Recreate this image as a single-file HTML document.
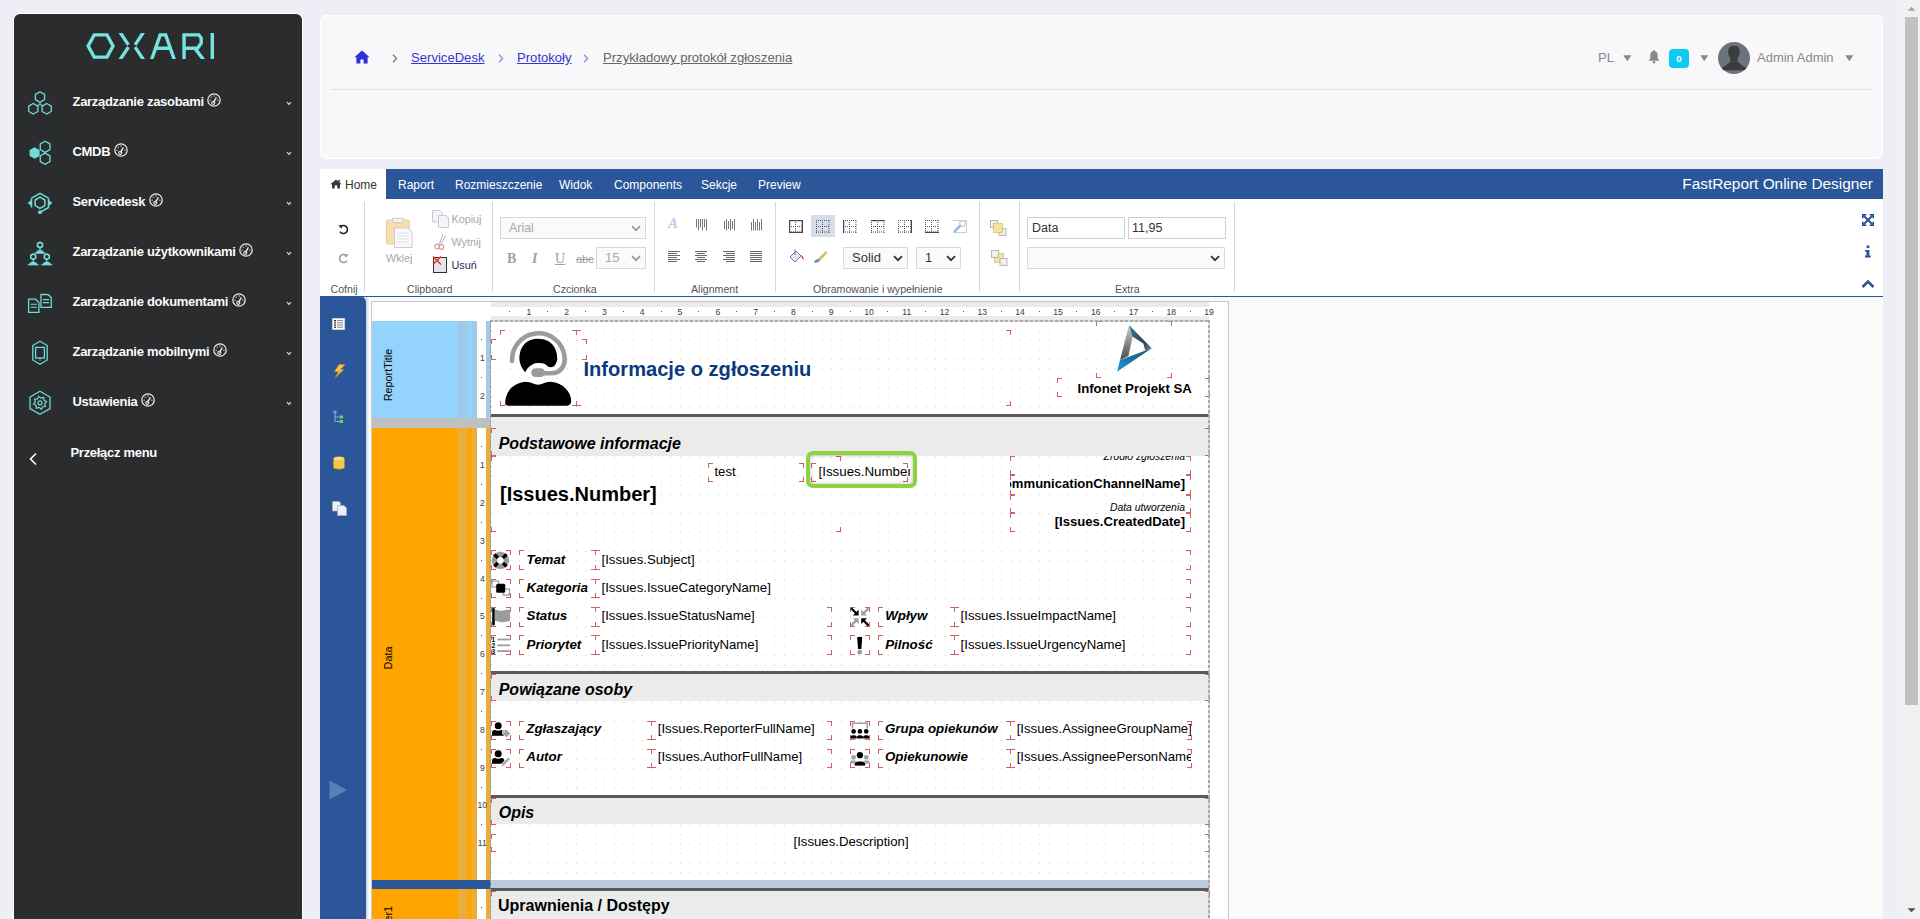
<!DOCTYPE html><html><head><meta charset="utf-8"><style>
html,body{margin:0;padding:0}
body{width:1920px;height:919px;overflow:hidden;position:relative;background:#eeeef6;font-family:"Liberation Sans",sans-serif}
.mi{position:absolute;left:72.5px;height:20px;line-height:20px;color:#fbfbfb;font-weight:bold;font-size:13px;white-space:nowrap;letter-spacing:-0.3px;margin-top:1px}
.gauge{display:inline-block;vertical-align:top;margin-left:3.6px;margin-top:0.6px;height:14px}
.gauge svg{display:block}
.bc{position:absolute;top:50px;line-height:16px;font-size:13.1px;text-decoration:underline;text-underline-offset:1px;white-space:nowrap}
.hr{position:absolute;top:49px;line-height:17px;font-size:13px;color:#888;white-space:nowrap}
.tb{position:absolute;top:176px;line-height:18px;font-size:12px;white-space:nowrap}
.gl{position:absolute;top:282px;line-height:14px;font-size:10.6px;color:#555;white-space:nowrap}
.tl{position:absolute;line-height:14px;font-size:10.8px;white-space:nowrap}
.rn{position:absolute;width:20px;text-align:center;font-size:8.6px;line-height:9px;color:#3a3a3a;font-family:"Liberation Sans",sans-serif}
.bl{position:absolute;width:200px;height:14px;line-height:14px;text-align:center;white-space:nowrap;font-size:10.8px;color:#000;transform:rotate(-90deg);transform-origin:50% 50%}
.mk{position:absolute;background:#c86464}
.rt{position:absolute;white-space:nowrap;line-height:1}
</style></head><body>
<div id="sb" style="position:absolute;left:14px;top:14px;width:288px;height:920px;background:#2b2c2e;border-radius:6px 6px 0 0;box-shadow:0 0 0 1px #fff"></div>
<svg style="position:absolute;left:80px;top:25px" width="140" height="45" viewBox="0 0 1920 617">
<g fill="none" stroke="#76e4de" stroke-width="47" stroke-linejoin="miter">
<polygon points="112,288 195,135 370,135 453,288 370,440 195,440"/>
<clipPath id="lgc"><rect x="0" y="110" width="1920" height="355"/></clipPath><path clip-path="url(#lgc)" d="M530,70 L664,272 M664,303 L530,505 M890,70 L756,272 M756,303 L890,505" stroke-width="46" stroke-linecap="butt"/>
<path clip-path="url(#lgc)" d="M978,485 L1100,135 L1175,135 L1297,485 M1045,318 L1230,318"/>
<path clip-path="url(#lgc)" d="M1427,485 L1427,135 L1630,135 L1662,178 L1662,250 L1612,318 L1427,318 M1570,310 L1700,485"/>
<path d="M1814,110 L1814,465"/>
</g></svg>
<div class="mi" style="top:91px">Zarządzanie zasobami<span class="gauge"><svg width="14" height="14" viewBox="0 0 14 14"><circle cx="7" cy="7" r="6.2" fill="none" stroke="#e8e8e8" stroke-width="1.25"/><path d="M6.4,9.7 L9.4,4.3" stroke="#e8e8e8" stroke-width="1.4"/><circle cx="6.3" cy="9.8" r="1.6" fill="none" stroke="#e8e8e8" stroke-width="1.1"/><circle cx="7" cy="3" r=".65" fill="#e8e8e8"/><circle cx="4.2" cy="4.2" r=".65" fill="#e8e8e8"/><circle cx="3.1" cy="7.2" r=".65" fill="#e8e8e8"/><circle cx="10.9" cy="7.2" r=".65" fill="#e8e8e8"/></svg></span></div>
<svg style="position:absolute;left:286px;top:101px" width="6" height="5" viewBox="0 0 6 5"><path d="M1,1.2 L3,3.4 L5,1.2" fill="none" stroke="#ddd" stroke-width="1.1"/></svg>
<div class="mi" style="top:141px">CMDB<span class="gauge"><svg width="14" height="14" viewBox="0 0 14 14"><circle cx="7" cy="7" r="6.2" fill="none" stroke="#e8e8e8" stroke-width="1.25"/><path d="M6.4,9.7 L9.4,4.3" stroke="#e8e8e8" stroke-width="1.4"/><circle cx="6.3" cy="9.8" r="1.6" fill="none" stroke="#e8e8e8" stroke-width="1.1"/><circle cx="7" cy="3" r=".65" fill="#e8e8e8"/><circle cx="4.2" cy="4.2" r=".65" fill="#e8e8e8"/><circle cx="3.1" cy="7.2" r=".65" fill="#e8e8e8"/><circle cx="10.9" cy="7.2" r=".65" fill="#e8e8e8"/></svg></span></div>
<svg style="position:absolute;left:286px;top:151px" width="6" height="5" viewBox="0 0 6 5"><path d="M1,1.2 L3,3.4 L5,1.2" fill="none" stroke="#ddd" stroke-width="1.1"/></svg>
<div class="mi" style="top:191px">Servicedesk<span class="gauge"><svg width="14" height="14" viewBox="0 0 14 14"><circle cx="7" cy="7" r="6.2" fill="none" stroke="#e8e8e8" stroke-width="1.25"/><path d="M6.4,9.7 L9.4,4.3" stroke="#e8e8e8" stroke-width="1.4"/><circle cx="6.3" cy="9.8" r="1.6" fill="none" stroke="#e8e8e8" stroke-width="1.1"/><circle cx="7" cy="3" r=".65" fill="#e8e8e8"/><circle cx="4.2" cy="4.2" r=".65" fill="#e8e8e8"/><circle cx="3.1" cy="7.2" r=".65" fill="#e8e8e8"/><circle cx="10.9" cy="7.2" r=".65" fill="#e8e8e8"/></svg></span></div>
<svg style="position:absolute;left:286px;top:201px" width="6" height="5" viewBox="0 0 6 5"><path d="M1,1.2 L3,3.4 L5,1.2" fill="none" stroke="#ddd" stroke-width="1.1"/></svg>
<div class="mi" style="top:241px">Zarządzanie użytkownikami<span class="gauge"><svg width="14" height="14" viewBox="0 0 14 14"><circle cx="7" cy="7" r="6.2" fill="none" stroke="#e8e8e8" stroke-width="1.25"/><path d="M6.4,9.7 L9.4,4.3" stroke="#e8e8e8" stroke-width="1.4"/><circle cx="6.3" cy="9.8" r="1.6" fill="none" stroke="#e8e8e8" stroke-width="1.1"/><circle cx="7" cy="3" r=".65" fill="#e8e8e8"/><circle cx="4.2" cy="4.2" r=".65" fill="#e8e8e8"/><circle cx="3.1" cy="7.2" r=".65" fill="#e8e8e8"/><circle cx="10.9" cy="7.2" r=".65" fill="#e8e8e8"/></svg></span></div>
<svg style="position:absolute;left:286px;top:251px" width="6" height="5" viewBox="0 0 6 5"><path d="M1,1.2 L3,3.4 L5,1.2" fill="none" stroke="#ddd" stroke-width="1.1"/></svg>
<div class="mi" style="top:291px">Zarządzanie dokumentami<span class="gauge"><svg width="14" height="14" viewBox="0 0 14 14"><circle cx="7" cy="7" r="6.2" fill="none" stroke="#e8e8e8" stroke-width="1.25"/><path d="M6.4,9.7 L9.4,4.3" stroke="#e8e8e8" stroke-width="1.4"/><circle cx="6.3" cy="9.8" r="1.6" fill="none" stroke="#e8e8e8" stroke-width="1.1"/><circle cx="7" cy="3" r=".65" fill="#e8e8e8"/><circle cx="4.2" cy="4.2" r=".65" fill="#e8e8e8"/><circle cx="3.1" cy="7.2" r=".65" fill="#e8e8e8"/><circle cx="10.9" cy="7.2" r=".65" fill="#e8e8e8"/></svg></span></div>
<svg style="position:absolute;left:286px;top:301px" width="6" height="5" viewBox="0 0 6 5"><path d="M1,1.2 L3,3.4 L5,1.2" fill="none" stroke="#ddd" stroke-width="1.1"/></svg>
<div class="mi" style="top:341px">Zarządzanie mobilnymi<span class="gauge"><svg width="14" height="14" viewBox="0 0 14 14"><circle cx="7" cy="7" r="6.2" fill="none" stroke="#e8e8e8" stroke-width="1.25"/><path d="M6.4,9.7 L9.4,4.3" stroke="#e8e8e8" stroke-width="1.4"/><circle cx="6.3" cy="9.8" r="1.6" fill="none" stroke="#e8e8e8" stroke-width="1.1"/><circle cx="7" cy="3" r=".65" fill="#e8e8e8"/><circle cx="4.2" cy="4.2" r=".65" fill="#e8e8e8"/><circle cx="3.1" cy="7.2" r=".65" fill="#e8e8e8"/><circle cx="10.9" cy="7.2" r=".65" fill="#e8e8e8"/></svg></span></div>
<svg style="position:absolute;left:286px;top:351px" width="6" height="5" viewBox="0 0 6 5"><path d="M1,1.2 L3,3.4 L5,1.2" fill="none" stroke="#ddd" stroke-width="1.1"/></svg>
<div class="mi" style="top:391px">Ustawienia<span class="gauge"><svg width="14" height="14" viewBox="0 0 14 14"><circle cx="7" cy="7" r="6.2" fill="none" stroke="#e8e8e8" stroke-width="1.25"/><path d="M6.4,9.7 L9.4,4.3" stroke="#e8e8e8" stroke-width="1.4"/><circle cx="6.3" cy="9.8" r="1.6" fill="none" stroke="#e8e8e8" stroke-width="1.1"/><circle cx="7" cy="3" r=".65" fill="#e8e8e8"/><circle cx="4.2" cy="4.2" r=".65" fill="#e8e8e8"/><circle cx="3.1" cy="7.2" r=".65" fill="#e8e8e8"/><circle cx="10.9" cy="7.2" r=".65" fill="#e8e8e8"/></svg></span></div>
<svg style="position:absolute;left:286px;top:401px" width="6" height="5" viewBox="0 0 6 5"><path d="M1,1.2 L3,3.4 L5,1.2" fill="none" stroke="#ddd" stroke-width="1.1"/></svg>
<svg style="position:absolute;left:20px;top:80px" width="40" height="350" viewBox="20 80 40 350"><g fill="none" stroke="#6fdcd6" stroke-width="1.3"><polygon points="40.00,91.70 44.59,94.35 44.59,99.65 40.00,102.30 35.41,99.65 35.41,94.35"/><polygon points="33.30,103.50 37.89,106.15 37.89,111.45 33.30,114.10 28.71,111.45 28.71,106.15"/><polygon points="46.70,103.50 51.29,106.15 51.29,111.45 46.70,114.10 42.11,111.45 42.11,106.15"/><path d="M40,102.5 L40,105 M36.5,106 L40,104.5 L43.5,106"/><polygon points="34.60,147.20 39.62,150.10 39.62,155.90 34.60,158.80 29.58,155.90 29.58,150.10" fill="#6fdcd6" stroke="none"/><polygon points="45.10,141.20 49.95,144.00 49.95,149.60 45.10,152.40 40.25,149.60 40.25,144.00"/><polygon points="45.10,153.10 49.95,155.90 49.95,161.50 45.10,164.30 40.25,161.50 40.25,155.90"/><polygon points="40.00,197.20 44.85,200.00 44.85,205.60 40.00,208.40 35.15,205.60 35.15,200.00" stroke-width="1.5"/><path d="M31.5,198.2 L40,193.4 L48.5,198.2 M31.5,207.5 L31.5,198.2 M48.5,198.2 L48.5,207.5 L40,212.3" stroke-width="1.5"/><path d="M27.6,203 L32,199.6 L32,206.4 Z M52.4,203 L48,199.6 L48,206.4 Z" fill="#6fdcd6" stroke="none"/><circle cx="40" cy="212.2" r="1.9" fill="#6fdcd6" stroke="none"/><polygon points="40.00,242.20 42.42,243.60 42.42,246.40 40.00,247.80 37.58,246.40 37.58,243.60" stroke-width="1.7"/><path d="M34.6,253.4 L38.4,250.2 L41.6,250.2 L45.4,253.4 Z" fill="#6fdcd6" stroke="#6fdcd6" stroke-width="0.6"/><path d="M40,247.8 L40,250.2" stroke-width="1"/><polygon points="33.20,253.90 35.62,255.30 35.62,258.10 33.20,259.50 30.78,258.10 30.78,255.30" stroke-width="1.7"/><path d="M27.800000000000004,265.09999999999997 L31.6,261.9 L34.800000000000004,261.9 L38.6,265.09999999999997 Z" fill="#6fdcd6" stroke="#6fdcd6" stroke-width="0.6"/><path d="M33.2,259.5 L33.2,261.9" stroke-width="1"/><polygon points="46.80,253.90 49.22,255.30 49.22,258.10 46.80,259.50 44.38,258.10 44.38,255.30" stroke-width="1.7"/><path d="M41.4,265.09999999999997 L45.199999999999996,261.9 L48.4,261.9 L52.199999999999996,265.09999999999997 Z" fill="#6fdcd6" stroke="#6fdcd6" stroke-width="0.6"/><path d="M46.8,259.5 L46.8,261.9" stroke-width="1"/><path d="M41,294.5 L48,294.5 L51.2,297.5 L51.2,307.3 L41,307.3 Z" stroke-width="1.3"/><path d="M43,299.6 L49,299.6 M43,302.6 L49,302.6" stroke-width="1.1"/><path d="M28.6,299.2 L35.5,299.2 L38.9,302.3 L38.9,312.3 L28.6,312.3 Z" stroke-width="1.3"/><path d="M30.6,304.3 L36.8,304.3 M30.6,307.2 L36.8,307.2" stroke-width="1.1"/><polygon points="40,341.2 47.2,345.5 47.2,360 40,364.3 32.8,360 32.8,345.5"/><rect x="35.6" y="347.4" width="8.8" height="10.6"/><rect x="39" y="359.6" width="2" height="0.8" fill="#6fdcd6" stroke="none"/><polygon points="40.00,391.30 49.96,397.05 49.96,408.55 40.00,414.30 30.04,408.55 30.04,397.05"/><polygon points="46.47,401.51 44.61,403.72 45.49,406.47 42.61,406.71 41.29,409.27 39.08,407.41 36.33,408.29 36.09,405.41 33.53,404.09 35.39,401.88 34.51,399.13 37.39,398.89 38.71,396.33 40.92,398.19 43.67,397.31 43.91,400.19" stroke-width="1.2"/><circle cx="40" cy="402.8" r="2" stroke-width="1.2"/></g></svg>
<div class="mi" style="top:442px;left:70.5px">Przełącz menu</div>
<svg style="position:absolute;left:28px;top:452px" width="10" height="14" viewBox="0 0 10 14"><path d="M8,1.5 L2.5,7 L8,12.5" fill="none" stroke="#fff" stroke-width="1.6"/></svg>
<div style="position:absolute;left:320px;top:15px;width:1563px;height:144px;background:#f8f8fb;border-radius:6px;box-sizing:border-box;border:1px solid #fff"></div>
<div style="position:absolute;left:330px;top:89px;width:1543px;height:1px;background:#dfe1ea"></div>
<svg style="position:absolute;left:354px;top:50px" width="16" height="14" viewBox="0 0 16 14"><path d="M8,0.6 L15.6,7.2 L13.6,7.2 L13.6,13.6 L9.6,13.6 L9.6,9.4 L6.4,9.4 L6.4,13.6 L2.4,13.6 L2.4,7.2 L0.4,7.2 Z" fill="#2f30d6"/></svg>
<svg style="position:absolute;left:392px;top:54px" width="6" height="9" viewBox="0 0 6 9"><path d="M1,0.8 L4.6,4.5 L1,8.2" fill="none" stroke="#777" stroke-width="1.3"/></svg>
<a class="bc" style="left:411px;color:#3434d0">ServiceDesk</a>
<svg style="position:absolute;left:498px;top:54px" width="6" height="9" viewBox="0 0 6 9"><path d="M1,0.8 L4.6,4.5 L1,8.2" fill="none" stroke="#8a8ae8" stroke-width="1.3"/></svg>
<a class="bc" style="left:517px;color:#3434d0">Protokoły</a>
<svg style="position:absolute;left:583px;top:54px" width="6" height="9" viewBox="0 0 6 9"><path d="M1,0.8 L4.6,4.5 L1,8.2" fill="none" stroke="#8a8ae8" stroke-width="1.3"/></svg>
<a class="bc" style="left:603px;color:#666">Przykładowy protokół zgłoszenia</a>
<div class="hr" style="left:1598px">PL</div>
<svg style="position:absolute;left:1622.5px;top:55px" width="9" height="7" viewBox="0 0 9 7"><path d="M0.3,0.3 L8.3,0.3 L4.3,6.3 Z" fill="#888"/></svg>
<svg style="position:absolute;left:1647px;top:50px" width="14" height="14" viewBox="0 0 14 14"><path d="M7,1 C4.2,1 3.3,3.2 3.3,5.5 L3.3,8.6 L1.6,10.8 L12.4,10.8 L10.7,8.6 L10.7,5.5 C10.7,3.2 9.8,1 7,1 Z" fill="#8a8a8a"/><circle cx="7" cy="12.2" r="1.3" fill="#8a8a8a"/><rect x="6.3" y="0" width="1.4" height="1.6" fill="#8a8a8a"/></svg>
<div style="position:absolute;left:1669px;top:49px;width:20px;height:19px;background:#0dcaf0;border-radius:4px;color:#fff;font-weight:bold;font-size:9.5px;line-height:20px;text-align:center">0</div>
<svg style="position:absolute;left:1699.5px;top:55px" width="9" height="7" viewBox="0 0 9 7"><path d="M0.3,0.3 L8.3,0.3 L4.3,6.3 Z" fill="#888"/></svg>
<svg style="position:absolute;left:1718px;top:42px" width="32" height="32" viewBox="0 0 32 32"><defs><clipPath id="avc"><circle cx="16" cy="16" r="16"/></clipPath></defs><circle cx="16" cy="16" r="16" fill="#6b737b"/><g clip-path="url(#avc)" fill="#3c3c3c"><path d="M10.2,9.5 C10.2,5.5 12.5,3.8 15.9,3.8 C19.3,3.8 21.7,5.5 21.7,9.5 C21.7,12.5 20.8,14.5 19.6,15.8 L19.6,19.2 L12.3,19.2 L12.3,15.8 C11.1,14.5 10.2,12.5 10.2,9.5 Z"/><path d="M1,28.2 L7.5,23.6 C9.5,22.2 11.5,20.4 12.8,19.2 L19.1,19.2 C20.4,20.4 22.4,22.2 24.4,23.6 L31,28.2 Z"/></g></svg>
<div class="hr" style="left:1757px">Admin Admin</div>
<svg style="position:absolute;left:1844.5px;top:55px" width="9" height="7" viewBox="0 0 9 7"><path d="M0.3,0.3 L8.3,0.3 L4.3,6.3 Z" fill="#888"/></svg>
<div style="position:absolute;left:1903px;top:0;width:17px;height:919px;background:#f1f1f1"></div>
<div style="position:absolute;left:1905px;top:17px;width:13px;height:688px;background:#c1c1c1"></div>
<svg style="position:absolute;left:1903px;top:0" width="17" height="17" viewBox="0 0 17 17"><path d="M4.5,10.8 L8.5,6.8 L12.5,10.8 Z" fill="#a3a3a3"/></svg>
<svg style="position:absolute;left:1903px;top:902px" width="17" height="17" viewBox="0 0 17 17"><path d="M4.5,6.2 L8.5,10.2 L12.5,6.2 Z" fill="#505050"/></svg>
<div style="position:absolute;left:320px;top:169px;width:1563px;height:750px;background:#fafafa"></div>
<div style="position:absolute;left:320px;top:169px;width:1563px;height:127px;background:#fff"></div>
<div style="position:absolute;left:386px;top:169px;width:1497px;height:30px;background:#2b579a"></div>
<svg style="position:absolute;left:330px;top:179px" width="12" height="10" viewBox="0 0 12 10"><path d="M6,0.5 L11.6,5.2 L10,5.2 L10,9.6 L7.3,9.6 L7.3,6.6 L4.7,6.6 L4.7,9.6 L2,9.6 L2,5.2 L0.4,5.2 Z" fill="#3a3a3a"/><rect x="8.3" y="0.8" width="1.5" height="2.6" fill="#3a3a3a"/></svg>
<div class="tb" style="left:345px;color:#333">Home</div>
<div class="tb" style="left:398px;color:#fff">Raport</div>
<div class="tb" style="left:455px;color:#fff">Rozmieszczenie</div>
<div class="tb" style="left:559px;color:#fff">Widok</div>
<div class="tb" style="left:614px;color:#fff">Components</div>
<div class="tb" style="left:701px;color:#fff">Sekcje</div>
<div class="tb" style="left:758px;color:#fff">Preview</div>
<div style="position:absolute;left:1573px;top:172px;width:300px;height:24px;line-height:24px;text-align:right;color:#fff;font-size:15.4px;white-space:nowrap">FastReport Online Designer</div>
<div style="position:absolute;left:364px;top:202px;width:1px;height:90px;background:#d8d8d8"></div>
<div style="position:absolute;left:492px;top:202px;width:1px;height:90px;background:#d8d8d8"></div>
<div style="position:absolute;left:654px;top:202px;width:1px;height:90px;background:#d8d8d8"></div>
<div style="position:absolute;left:775px;top:202px;width:1px;height:90px;background:#d8d8d8"></div>
<div style="position:absolute;left:979px;top:202px;width:1px;height:90px;background:#d8d8d8"></div>
<div style="position:absolute;left:1019px;top:202px;width:1px;height:90px;background:#d8d8d8"></div>
<div style="position:absolute;left:1234px;top:202px;width:1px;height:90px;background:#d8d8d8"></div>
<div style="position:absolute;left:320px;top:296px;width:1563px;height:1px;background:#2b579a"></div>
<div class="gl" style="left:330.5px">Cofnij</div>
<div class="gl" style="left:407px">Clipboard</div>
<div class="gl" style="left:553px">Czcionka</div>
<div class="gl" style="left:691px">Alignment</div>
<div class="gl" style="left:813px">Obramowanie i wypełnienie</div>
<div class="gl" style="left:1115px">Extra</div>
<svg style="position:absolute;left:337px;top:223px" width="13" height="13" viewBox="0 0 13 13"><path d="M3.2,4.2 A4,4 0 1 1 3,8.6" fill="none" stroke="#222" stroke-width="1.6"/><path d="M1.2,2.2 L4.8,2.2 L4.8,5.8 Z" fill="#222"/></svg>
<svg style="position:absolute;left:337px;top:252px" width="13" height="13" viewBox="0 0 13 13"><path d="M9.8,4.2 A4,4 0 1 0 10,8.6" fill="none" stroke="#9a9a9a" stroke-width="1.5"/><path d="M11.8,2.2 L8.2,2.2 L8.2,5.8 Z" fill="#9a9a9a"/></svg>
<svg style="position:absolute;left:385px;top:217px" width="28" height="32" viewBox="0 0 28 32">
<rect x="1.5" y="3" width="23" height="24" rx="2" fill="#f7e0ad" stroke="#e8cf9a" stroke-width="1"/>
<rect x="7.5" y="1.2" width="11" height="4.5" rx="1" fill="#f3f3f3" stroke="#bbb" stroke-width="0.8"/>
<path d="M9.5,11 L23,11 L27,15 L27,30.5 L9.5,30.5 Z" fill="#fafafa" stroke="#c9ccd6" stroke-width="1"/>
<path d="M12,16 L24,16 M12,19 L24,19 M12,22 L24,22 M12,25 L24,25" stroke="#d8dbe3" stroke-width="0.8"/></svg>
<div class="tl" style="left:386px;top:251px;color:#a8a8a8">Wklej</div>
<svg style="position:absolute;left:432px;top:210px" width="17" height="18" viewBox="0 0 17 18"><path d="M0.5,0.5 L8,0.5 L10,2.5 L10,12 L0.5,12 Z" fill="#f4f5f8" stroke="#c7cad3" stroke-width="1"/><path d="M6.5,5.5 L14,5.5 L16.5,8 L16.5,17.5 L6.5,17.5 Z" fill="#f4f5f8" stroke="#c7cad3" stroke-width="1"/></svg>
<div class="tl" style="left:451.5px;top:212px;color:#a8a8a8">Kopiuj</div>
<svg style="position:absolute;left:433px;top:233px" width="14" height="17" viewBox="0 0 14 17"><path d="M6,12 L10,1 M7.5,12 L12.5,2.5" stroke="#a9b6cc" stroke-width="1"/><circle cx="4" cy="13.5" r="2.3" fill="none" stroke="#e49a9a" stroke-width="1.2"/><circle cx="8.5" cy="14" r="2.3" fill="none" stroke="#e49a9a" stroke-width="1.2"/></svg>
<div class="tl" style="left:451.5px;top:235px;color:#a8a8a8">Wytnij</div>
<svg style="position:absolute;left:432px;top:256px" width="16" height="17" viewBox="0 0 16 17"><rect x="1.5" y="1.5" width="13" height="15" fill="#e2e6ee" stroke="#333" stroke-width="1"/><path d="M1,0.5 L9,8.5 M9,0.5 L1,8.5" stroke="#e32" stroke-width="1.5"/></svg>
<div class="tl" style="left:451.5px;top:257.5px;color:#1a2a55">Usuń</div>
<div style="position:absolute;left:500px;top:217px;width:144px;height:20px;border:1px solid #d9d9d9;background:#fafafa"></div><div style="position:absolute;left:509px;top:217px;height:22px;line-height:22px;font-size:12.4px;color:#a8a8a8">Arial</div><svg style="position:absolute;left:631px;top:225.0px" width="10" height="7" viewBox="0 0 10 7"><path d="M1,1.2 L5,5.2 L9,1.2" fill="none" stroke="#9a9a9a" stroke-width="1.8"/></svg>
<div style="position:absolute;left:596px;top:247px;width:48px;height:20px;border:1px solid #d9d9d9;background:#fafafa"></div><div style="position:absolute;left:605px;top:247px;height:22px;line-height:22px;font-size:13px;color:#a8a8a8">15</div><svg style="position:absolute;left:631px;top:255.0px" width="10" height="7" viewBox="0 0 10 7"><path d="M1,1.2 L5,5.2 L9,1.2" fill="none" stroke="#9a9a9a" stroke-width="1.8"/></svg>
<div style="position:absolute;left:507px;top:251px;font:bold 14px 'Liberation Serif',serif;color:#a0a0a0">B</div>
<div style="position:absolute;left:532px;top:251px;font:italic bold 14px 'Liberation Serif',serif;color:#a0a0a0">I</div>
<div style="position:absolute;left:555px;top:251px;font:14px 'Liberation Serif',serif;color:#a0a0a0;text-decoration:underline">U</div>
<div style="position:absolute;left:576px;top:252.5px;font:11px 'Liberation Sans',sans-serif;color:#a0a0a0;text-decoration:line-through">abc</div>
<div style="position:absolute;left:668px;top:215px;font:italic bold 15px 'Liberation Serif',serif;color:#b7cdee">A</div>
<svg style="position:absolute;left:696px;top:219px" width="12" height="12" viewBox="0 0 12 12"><rect x="0" y="0" width="1" height="8.5" fill="#777"/><rect x="2" y="0" width="1" height="11.5" fill="#777"/><rect x="4" y="0" width="1" height="8.5" fill="#777"/><rect x="6" y="0" width="1" height="11.5" fill="#777"/><rect x="8" y="0" width="1" height="8.5" fill="#777"/><rect x="10" y="0" width="1" height="11.5" fill="#777"/></svg>
<svg style="position:absolute;left:724px;top:219px" width="12" height="12" viewBox="0 0 12 12"><rect x="0" y="2" width="1" height="8" fill="#777"/><rect x="2" y="0" width="1" height="11.5" fill="#777"/><rect x="4" y="2" width="1" height="8" fill="#777"/><rect x="6" y="0" width="1" height="11.5" fill="#777"/><rect x="8" y="2" width="1" height="8" fill="#777"/><rect x="10" y="0" width="1" height="11.5" fill="#777"/></svg>
<svg style="position:absolute;left:751px;top:219px" width="12" height="12" viewBox="0 0 12 12"><rect x="0" y="3" width="1" height="8.5" fill="#777"/><rect x="2" y="0" width="1" height="11.5" fill="#777"/><rect x="4" y="3" width="1" height="8.5" fill="#777"/><rect x="6" y="0" width="1" height="11.5" fill="#777"/><rect x="8" y="3" width="1" height="8.5" fill="#777"/><rect x="10" y="0" width="1" height="11.5" fill="#777"/></svg>
<svg style="position:absolute;left:668px;top:251px" width="13" height="12" viewBox="0 0 13 12"><rect x="0" y="0" width="12" height="1" fill="#666"/><rect x="0" y="2" width="9" height="1" fill="#666"/><rect x="0" y="4" width="12" height="1" fill="#666"/><rect x="0" y="6" width="9" height="1" fill="#666"/><rect x="0" y="8" width="12" height="1" fill="#666"/><rect x="0" y="10" width="9" height="1" fill="#666"/></svg>
<svg style="position:absolute;left:695px;top:251px" width="13" height="12" viewBox="0 0 13 12"><rect x="0" y="0" width="12" height="1" fill="#666"/><rect x="2" y="2" width="8" height="1" fill="#666"/><rect x="0" y="4" width="12" height="1" fill="#666"/><rect x="2" y="6" width="8" height="1" fill="#666"/><rect x="0" y="8" width="12" height="1" fill="#666"/><rect x="2" y="10" width="8" height="1" fill="#666"/></svg>
<svg style="position:absolute;left:723px;top:251px" width="13" height="12" viewBox="0 0 13 12"><rect x="0" y="0" width="12" height="1" fill="#666"/><rect x="3" y="2" width="9" height="1" fill="#666"/><rect x="0" y="4" width="12" height="1" fill="#666"/><rect x="3" y="6" width="9" height="1" fill="#666"/><rect x="0" y="8" width="12" height="1" fill="#666"/><rect x="3" y="10" width="9" height="1" fill="#666"/></svg>
<svg style="position:absolute;left:750px;top:251px" width="13" height="12" viewBox="0 0 13 12"><rect x="0" y="0" width="12" height="1" fill="#666"/><rect x="0" y="2" width="12" height="1" fill="#666"/><rect x="0" y="4" width="12" height="1" fill="#666"/><rect x="0" y="6" width="12" height="1" fill="#666"/><rect x="0" y="8" width="12" height="1" fill="#666"/><rect x="0" y="10" width="12" height="1" fill="#666"/></svg>
<div style="position:absolute;left:811px;top:215px;width:24px;height:22px;background:#d5dcea"></div>
<svg style="position:absolute;left:789px;top:220px" width="14" height="13" viewBox="0 0 14 13"><g fill="#555"><rect x="0" y="0.0" width="1" height="1"/><rect x="2" y="0.0" width="1" height="1"/><rect x="4" y="0.0" width="1" height="1"/><rect x="6" y="0.0" width="1" height="1"/><rect x="8" y="0.0" width="1" height="1"/><rect x="10" y="0.0" width="1" height="1"/><rect x="12" y="0.0" width="1" height="1"/><rect x="0" y="6.0" width="1" height="1"/><rect x="2" y="6.0" width="1" height="1"/><rect x="4" y="6.0" width="1" height="1"/><rect x="6" y="6.0" width="1" height="1"/><rect x="8" y="6.0" width="1" height="1"/><rect x="10" y="6.0" width="1" height="1"/><rect x="12" y="6.0" width="1" height="1"/><rect x="0" y="11.5" width="1" height="1"/><rect x="2" y="11.5" width="1" height="1"/><rect x="4" y="11.5" width="1" height="1"/><rect x="6" y="11.5" width="1" height="1"/><rect x="8" y="11.5" width="1" height="1"/><rect x="10" y="11.5" width="1" height="1"/><rect x="12" y="11.5" width="1" height="1"/><rect x="0.0" y="0" width="1" height="1"/><rect x="0.0" y="2" width="1" height="1"/><rect x="0.0" y="4" width="1" height="1"/><rect x="0.0" y="6" width="1" height="1"/><rect x="0.0" y="8" width="1" height="1"/><rect x="0.0" y="10" width="1" height="1"/><rect x="0.0" y="12" width="1" height="1"/><rect x="6.0" y="0" width="1" height="1"/><rect x="6.0" y="2" width="1" height="1"/><rect x="6.0" y="4" width="1" height="1"/><rect x="6.0" y="6" width="1" height="1"/><rect x="6.0" y="8" width="1" height="1"/><rect x="6.0" y="10" width="1" height="1"/><rect x="6.0" y="12" width="1" height="1"/><rect x="12.5" y="0" width="1" height="1"/><rect x="12.5" y="2" width="1" height="1"/><rect x="12.5" y="4" width="1" height="1"/><rect x="12.5" y="6" width="1" height="1"/><rect x="12.5" y="8" width="1" height="1"/><rect x="12.5" y="10" width="1" height="1"/><rect x="12.5" y="12" width="1" height="1"/></g><rect x="0" y="0" width="14" height="1.2" fill="#445"/><rect x="0" y="11.8" width="14" height="1.2" fill="#445"/><rect x="0" y="0" width="1.2" height="13" fill="#445"/><rect x="12.8" y="0" width="1.2" height="13" fill="#445"/></svg>
<svg style="position:absolute;left:816px;top:220px" width="14" height="13" viewBox="0 0 14 13"><g fill="#555"><rect x="0" y="0.0" width="1" height="1"/><rect x="2" y="0.0" width="1" height="1"/><rect x="4" y="0.0" width="1" height="1"/><rect x="6" y="0.0" width="1" height="1"/><rect x="8" y="0.0" width="1" height="1"/><rect x="10" y="0.0" width="1" height="1"/><rect x="12" y="0.0" width="1" height="1"/><rect x="0" y="6.0" width="1" height="1"/><rect x="2" y="6.0" width="1" height="1"/><rect x="4" y="6.0" width="1" height="1"/><rect x="6" y="6.0" width="1" height="1"/><rect x="8" y="6.0" width="1" height="1"/><rect x="10" y="6.0" width="1" height="1"/><rect x="12" y="6.0" width="1" height="1"/><rect x="0" y="11.5" width="1" height="1"/><rect x="2" y="11.5" width="1" height="1"/><rect x="4" y="11.5" width="1" height="1"/><rect x="6" y="11.5" width="1" height="1"/><rect x="8" y="11.5" width="1" height="1"/><rect x="10" y="11.5" width="1" height="1"/><rect x="12" y="11.5" width="1" height="1"/><rect x="0.0" y="0" width="1" height="1"/><rect x="0.0" y="2" width="1" height="1"/><rect x="0.0" y="4" width="1" height="1"/><rect x="0.0" y="6" width="1" height="1"/><rect x="0.0" y="8" width="1" height="1"/><rect x="0.0" y="10" width="1" height="1"/><rect x="0.0" y="12" width="1" height="1"/><rect x="6.0" y="0" width="1" height="1"/><rect x="6.0" y="2" width="1" height="1"/><rect x="6.0" y="4" width="1" height="1"/><rect x="6.0" y="6" width="1" height="1"/><rect x="6.0" y="8" width="1" height="1"/><rect x="6.0" y="10" width="1" height="1"/><rect x="6.0" y="12" width="1" height="1"/><rect x="12.5" y="0" width="1" height="1"/><rect x="12.5" y="2" width="1" height="1"/><rect x="12.5" y="4" width="1" height="1"/><rect x="12.5" y="6" width="1" height="1"/><rect x="12.5" y="8" width="1" height="1"/><rect x="12.5" y="10" width="1" height="1"/><rect x="12.5" y="12" width="1" height="1"/></g></svg>
<svg style="position:absolute;left:843px;top:220px" width="14" height="13" viewBox="0 0 14 13"><g fill="#555"><rect x="0" y="0.0" width="1" height="1"/><rect x="2" y="0.0" width="1" height="1"/><rect x="4" y="0.0" width="1" height="1"/><rect x="6" y="0.0" width="1" height="1"/><rect x="8" y="0.0" width="1" height="1"/><rect x="10" y="0.0" width="1" height="1"/><rect x="12" y="0.0" width="1" height="1"/><rect x="0" y="6.0" width="1" height="1"/><rect x="2" y="6.0" width="1" height="1"/><rect x="4" y="6.0" width="1" height="1"/><rect x="6" y="6.0" width="1" height="1"/><rect x="8" y="6.0" width="1" height="1"/><rect x="10" y="6.0" width="1" height="1"/><rect x="12" y="6.0" width="1" height="1"/><rect x="0" y="11.5" width="1" height="1"/><rect x="2" y="11.5" width="1" height="1"/><rect x="4" y="11.5" width="1" height="1"/><rect x="6" y="11.5" width="1" height="1"/><rect x="8" y="11.5" width="1" height="1"/><rect x="10" y="11.5" width="1" height="1"/><rect x="12" y="11.5" width="1" height="1"/><rect x="0.0" y="0" width="1" height="1"/><rect x="0.0" y="2" width="1" height="1"/><rect x="0.0" y="4" width="1" height="1"/><rect x="0.0" y="6" width="1" height="1"/><rect x="0.0" y="8" width="1" height="1"/><rect x="0.0" y="10" width="1" height="1"/><rect x="0.0" y="12" width="1" height="1"/><rect x="6.0" y="0" width="1" height="1"/><rect x="6.0" y="2" width="1" height="1"/><rect x="6.0" y="4" width="1" height="1"/><rect x="6.0" y="6" width="1" height="1"/><rect x="6.0" y="8" width="1" height="1"/><rect x="6.0" y="10" width="1" height="1"/><rect x="6.0" y="12" width="1" height="1"/><rect x="12.5" y="0" width="1" height="1"/><rect x="12.5" y="2" width="1" height="1"/><rect x="12.5" y="4" width="1" height="1"/><rect x="12.5" y="6" width="1" height="1"/><rect x="12.5" y="8" width="1" height="1"/><rect x="12.5" y="10" width="1" height="1"/><rect x="12.5" y="12" width="1" height="1"/></g><rect x="0" y="0" width="1.2" height="13" fill="#445"/></svg>
<svg style="position:absolute;left:871px;top:220px" width="14" height="13" viewBox="0 0 14 13"><g fill="#555"><rect x="0" y="0.0" width="1" height="1"/><rect x="2" y="0.0" width="1" height="1"/><rect x="4" y="0.0" width="1" height="1"/><rect x="6" y="0.0" width="1" height="1"/><rect x="8" y="0.0" width="1" height="1"/><rect x="10" y="0.0" width="1" height="1"/><rect x="12" y="0.0" width="1" height="1"/><rect x="0" y="6.0" width="1" height="1"/><rect x="2" y="6.0" width="1" height="1"/><rect x="4" y="6.0" width="1" height="1"/><rect x="6" y="6.0" width="1" height="1"/><rect x="8" y="6.0" width="1" height="1"/><rect x="10" y="6.0" width="1" height="1"/><rect x="12" y="6.0" width="1" height="1"/><rect x="0" y="11.5" width="1" height="1"/><rect x="2" y="11.5" width="1" height="1"/><rect x="4" y="11.5" width="1" height="1"/><rect x="6" y="11.5" width="1" height="1"/><rect x="8" y="11.5" width="1" height="1"/><rect x="10" y="11.5" width="1" height="1"/><rect x="12" y="11.5" width="1" height="1"/><rect x="0.0" y="0" width="1" height="1"/><rect x="0.0" y="2" width="1" height="1"/><rect x="0.0" y="4" width="1" height="1"/><rect x="0.0" y="6" width="1" height="1"/><rect x="0.0" y="8" width="1" height="1"/><rect x="0.0" y="10" width="1" height="1"/><rect x="0.0" y="12" width="1" height="1"/><rect x="6.0" y="0" width="1" height="1"/><rect x="6.0" y="2" width="1" height="1"/><rect x="6.0" y="4" width="1" height="1"/><rect x="6.0" y="6" width="1" height="1"/><rect x="6.0" y="8" width="1" height="1"/><rect x="6.0" y="10" width="1" height="1"/><rect x="6.0" y="12" width="1" height="1"/><rect x="12.5" y="0" width="1" height="1"/><rect x="12.5" y="2" width="1" height="1"/><rect x="12.5" y="4" width="1" height="1"/><rect x="12.5" y="6" width="1" height="1"/><rect x="12.5" y="8" width="1" height="1"/><rect x="12.5" y="10" width="1" height="1"/><rect x="12.5" y="12" width="1" height="1"/></g><rect x="0" y="0" width="14" height="1.2" fill="#445"/></svg>
<svg style="position:absolute;left:898px;top:220px" width="14" height="13" viewBox="0 0 14 13"><g fill="#555"><rect x="0" y="0.0" width="1" height="1"/><rect x="2" y="0.0" width="1" height="1"/><rect x="4" y="0.0" width="1" height="1"/><rect x="6" y="0.0" width="1" height="1"/><rect x="8" y="0.0" width="1" height="1"/><rect x="10" y="0.0" width="1" height="1"/><rect x="12" y="0.0" width="1" height="1"/><rect x="0" y="6.0" width="1" height="1"/><rect x="2" y="6.0" width="1" height="1"/><rect x="4" y="6.0" width="1" height="1"/><rect x="6" y="6.0" width="1" height="1"/><rect x="8" y="6.0" width="1" height="1"/><rect x="10" y="6.0" width="1" height="1"/><rect x="12" y="6.0" width="1" height="1"/><rect x="0" y="11.5" width="1" height="1"/><rect x="2" y="11.5" width="1" height="1"/><rect x="4" y="11.5" width="1" height="1"/><rect x="6" y="11.5" width="1" height="1"/><rect x="8" y="11.5" width="1" height="1"/><rect x="10" y="11.5" width="1" height="1"/><rect x="12" y="11.5" width="1" height="1"/><rect x="0.0" y="0" width="1" height="1"/><rect x="0.0" y="2" width="1" height="1"/><rect x="0.0" y="4" width="1" height="1"/><rect x="0.0" y="6" width="1" height="1"/><rect x="0.0" y="8" width="1" height="1"/><rect x="0.0" y="10" width="1" height="1"/><rect x="0.0" y="12" width="1" height="1"/><rect x="6.0" y="0" width="1" height="1"/><rect x="6.0" y="2" width="1" height="1"/><rect x="6.0" y="4" width="1" height="1"/><rect x="6.0" y="6" width="1" height="1"/><rect x="6.0" y="8" width="1" height="1"/><rect x="6.0" y="10" width="1" height="1"/><rect x="6.0" y="12" width="1" height="1"/><rect x="12.5" y="0" width="1" height="1"/><rect x="12.5" y="2" width="1" height="1"/><rect x="12.5" y="4" width="1" height="1"/><rect x="12.5" y="6" width="1" height="1"/><rect x="12.5" y="8" width="1" height="1"/><rect x="12.5" y="10" width="1" height="1"/><rect x="12.5" y="12" width="1" height="1"/></g><rect x="12.8" y="0" width="1.2" height="13" fill="#445"/></svg>
<svg style="position:absolute;left:925px;top:220px" width="14" height="13" viewBox="0 0 14 13"><g fill="#555"><rect x="0" y="0.0" width="1" height="1"/><rect x="2" y="0.0" width="1" height="1"/><rect x="4" y="0.0" width="1" height="1"/><rect x="6" y="0.0" width="1" height="1"/><rect x="8" y="0.0" width="1" height="1"/><rect x="10" y="0.0" width="1" height="1"/><rect x="12" y="0.0" width="1" height="1"/><rect x="0" y="6.0" width="1" height="1"/><rect x="2" y="6.0" width="1" height="1"/><rect x="4" y="6.0" width="1" height="1"/><rect x="6" y="6.0" width="1" height="1"/><rect x="8" y="6.0" width="1" height="1"/><rect x="10" y="6.0" width="1" height="1"/><rect x="12" y="6.0" width="1" height="1"/><rect x="0" y="11.5" width="1" height="1"/><rect x="2" y="11.5" width="1" height="1"/><rect x="4" y="11.5" width="1" height="1"/><rect x="6" y="11.5" width="1" height="1"/><rect x="8" y="11.5" width="1" height="1"/><rect x="10" y="11.5" width="1" height="1"/><rect x="12" y="11.5" width="1" height="1"/><rect x="0.0" y="0" width="1" height="1"/><rect x="0.0" y="2" width="1" height="1"/><rect x="0.0" y="4" width="1" height="1"/><rect x="0.0" y="6" width="1" height="1"/><rect x="0.0" y="8" width="1" height="1"/><rect x="0.0" y="10" width="1" height="1"/><rect x="0.0" y="12" width="1" height="1"/><rect x="6.0" y="0" width="1" height="1"/><rect x="6.0" y="2" width="1" height="1"/><rect x="6.0" y="4" width="1" height="1"/><rect x="6.0" y="6" width="1" height="1"/><rect x="6.0" y="8" width="1" height="1"/><rect x="6.0" y="10" width="1" height="1"/><rect x="6.0" y="12" width="1" height="1"/><rect x="12.5" y="0" width="1" height="1"/><rect x="12.5" y="2" width="1" height="1"/><rect x="12.5" y="4" width="1" height="1"/><rect x="12.5" y="6" width="1" height="1"/><rect x="12.5" y="8" width="1" height="1"/><rect x="12.5" y="10" width="1" height="1"/><rect x="12.5" y="12" width="1" height="1"/></g><rect x="0" y="11.8" width="14" height="1.2" fill="#445"/></svg>
<svg style="position:absolute;left:953px;top:220px" width="14" height="13" viewBox="0 0 14 13"><g fill="#ccc"><rect x="0" y="0" width="14" height="1"/><rect x="13" y="0" width="1" height="13"/><rect x="0" y="12" width="14" height="1"/></g><path d="M1,12 L8,5" stroke="#9bb6e8" stroke-width="2.5"/><circle cx="9.5" cy="3.5" r="2.8" fill="none" stroke="#ccc" stroke-width="1.2"/></svg>
<svg style="position:absolute;left:789px;top:249px" width="16" height="15" viewBox="0 0 16 15"><path d="M1,8 L7,2 L12,7 L6,13 Z" fill="#dfe8f5" stroke="#6a7a99" stroke-width="1"/><path d="M6,0.5 L6,6" stroke="#6a7a99" stroke-width="1"/><path d="M12,6 C14,7 15,9 14.5,11 L13,9 Z" fill="#d22"/></svg>
<svg style="position:absolute;left:813px;top:250px" width="15" height="14" viewBox="0 0 15 14"><path d="M5,9 L13,1.5 L14,2.5 L7,10.5 Z" fill="#e8c860" stroke="#b09040" stroke-width="0.6"/><path d="M1,13 C1.5,10 3,9 5,9 L7,10.5 C6.5,12 4,13 1,13 Z" fill="#6f8fc8"/></svg>
<div style="position:absolute;left:843px;top:247px;width:63px;height:20px;border:1px solid #d9d9d9;background:#fafafa"></div><div style="position:absolute;left:852px;top:247px;height:22px;line-height:22px;font-size:13px;color:#333">Solid</div><svg style="position:absolute;left:893px;top:255.0px" width="10" height="7" viewBox="0 0 10 7"><path d="M1,1.2 L5,5.2 L9,1.2" fill="none" stroke="#333" stroke-width="1.8"/></svg>
<div style="position:absolute;left:916px;top:247px;width:43px;height:20px;border:1px solid #d9d9d9;background:#fafafa"></div><div style="position:absolute;left:925px;top:247px;height:22px;line-height:22px;font-size:13px;color:#333">1</div><svg style="position:absolute;left:946px;top:255.0px" width="10" height="7" viewBox="0 0 10 7"><path d="M1,1.2 L5,5.2 L9,1.2" fill="none" stroke="#333" stroke-width="1.8"/></svg>
<svg style="position:absolute;left:990px;top:220px" width="17" height="16" viewBox="0 0 17 16"><rect x="0.5" y="0.5" width="7" height="7" fill="#f0f0f0" stroke="#aaa" stroke-width="0.8"/><rect x="9" y="8.5" width="7" height="7" fill="#f0f0f0" stroke="#aaa" stroke-width="0.8"/><rect x="3.5" y="3.5" width="9" height="9" fill="#f6e3a0" stroke="#d8c070" stroke-width="0.8"/></svg>
<svg style="position:absolute;left:991px;top:250px" width="17" height="16" viewBox="0 0 17 16"><rect x="3.5" y="3.5" width="9" height="9" fill="#f6e3a0" stroke="#d8c070" stroke-width="0.8"/><rect x="0.5" y="0.5" width="7" height="7" fill="#f0f0f0" stroke="#aaa" stroke-width="0.8"/><rect x="9" y="8.5" width="7" height="7" fill="#f0f0f0" stroke="#aaa" stroke-width="0.8"/></svg>
<div style="position:absolute;left:1027px;top:217px;width:96px;height:20px;border:1px solid #cfcfcf;background:#fff"></div>
<div style="position:absolute;left:1032px;top:217px;line-height:22px;font-size:12.5px;color:#333">Data</div>
<div style="position:absolute;left:1128px;top:217px;width:96px;height:20px;border:1px solid #cfcfcf;background:#fff"></div>
<div style="position:absolute;left:1132px;top:217px;line-height:22px;font-size:12.5px;color:#333">11,95</div>
<div style="position:absolute;left:1027px;top:247px;width:196px;height:20px;border:1px solid #d9d9d9;background:#fafafa"></div><svg style="position:absolute;left:1210px;top:255.0px" width="10" height="7" viewBox="0 0 10 7"><path d="M1,1.2 L5,5.2 L9,1.2" fill="none" stroke="#333" stroke-width="1.8"/></svg>
<svg style="position:absolute;left:1862px;top:214px" width="12" height="12" viewBox="0 0 12 12"><path d="M2.2,2.2 L9.8,9.8 M9.8,2.2 L2.2,9.8" stroke="#2b579a" stroke-width="2"/><g fill="#2b579a"><path d="M0,0 L5,0 L0,5 Z"/><path d="M12,0 L7,0 L12,5 Z"/><path d="M0,12 L5,12 L0,7 Z"/><path d="M12,12 L7,12 L12,7 Z"/></g></svg>
<svg style="position:absolute;left:1864px;top:245px" width="8" height="13" viewBox="0 0 8 13"><g fill="#2b579a"><rect x="2.6" y="0.5" width="2.8" height="2.6"/><path d="M1,5 L5.4,5 L5.4,10.6 L6.8,10.6 L6.8,12.5 L1,12.5 L1,10.6 L2.4,10.6 L2.4,6.8 L1,6.8 Z"/></g></svg>
<svg style="position:absolute;left:1861px;top:279px" width="14" height="10" viewBox="0 0 14 10"><path d="M1.5,8 L7,2.5 L12.5,8" fill="none" stroke="#2b579a" stroke-width="2.6"/></svg>
<div style="position:absolute;left:320px;top:296px;width:46px;height:623px;background:#2b579a;border-top-right-radius:6px"></div>
<div style="position:absolute;left:366px;top:297px;width:5px;height:622px;background:linear-gradient(90deg,#c9d2e2,#fff 70%);"></div>
<svg style="position:absolute;left:332px;top:318px" width="13" height="12" viewBox="0 0 13 12"><rect x="0.5" y="0.5" width="12" height="11" fill="#fff" stroke="#c9cfe0" stroke-width="1"/><g fill="#222"><rect x="2" y="2" width="2" height="1.2"/><rect x="2" y="4.2" width="2" height="1.2"/><rect x="2" y="6.4" width="2" height="1.2"/><rect x="2" y="8.6" width="2" height="1.2"/></g><g fill="#999"><rect x="5" y="2" width="6" height="1.2"/><rect x="5" y="4.2" width="6" height="1.2"/><rect x="5" y="6.4" width="6" height="1.2"/><rect x="5" y="8.6" width="6" height="1.2"/></g></svg>
<svg style="position:absolute;left:333px;top:364px" width="13" height="14" viewBox="0 0 13 14"><path d="M6,0.5 L12,0.5 L7.5,5.5 L11,5.5 L2.5,13.5 L5.5,7.5 L1.5,7.5 Z" fill="#f3b940" stroke="#c98a20" stroke-width="0.7"/><path d="M3,7 L9,1.8" stroke="#fff" stroke-width="0.8" opacity=".6"/></svg>
<svg style="position:absolute;left:333px;top:410px" width="12" height="14" viewBox="0 0 12 14"><rect x="0.5" y="0.5" width="3" height="3" fill="#6fa2e8"/><path d="M2,3.5 L2,12 M2,7 L6,7 M2,11.5 L6,11.5" stroke="#bbb" stroke-width="0.8"/><rect x="6.5" y="5.5" width="3.5" height="3" fill="#6ccf6c"/><rect x="6.5" y="10" width="3.5" height="3" fill="#6ccf6c"/></svg>
<svg style="position:absolute;left:333px;top:456px" width="12" height="14" viewBox="0 0 12 14"><path d="M0.5,2.5 C0.5,0.3 11.5,0.3 11.5,2.5 L11.5,11.5 C11.5,13.7 0.5,13.7 0.5,11.5 Z" fill="#f2c94c" stroke="#b98a1a" stroke-width="0.8"/><ellipse cx="6" cy="2.6" rx="5" ry="1.6" fill="#f8e08a"/></svg>
<svg style="position:absolute;left:332px;top:501px" width="15" height="15" viewBox="0 0 15 15"><path d="M0.5,0.5 L7,0.5 L8.5,2 L8.5,10 L0.5,10 Z" fill="#eef0f6" stroke="#aab" stroke-width="0.8"/><path d="M5.5,4.5 L12,4.5 L14.5,7 L14.5,14.5 L5.5,14.5 Z" fill="#eef0f6" stroke="#aab" stroke-width="0.8"/></svg>
<svg style="position:absolute;left:329px;top:780px" width="19" height="20" viewBox="0 0 19 20"><path d="M0.5,0.5 L18,10 L0.5,19.5 Z" fill="#5a7fb8"/></svg>
<div style="position:absolute;left:371px;top:301px;width:858px;height:618px;background:#fff;box-sizing:border-box;border:1px solid #c6c6c6;border-bottom:none"></div>
<div style="position:absolute;left:491px;top:302px;width:718px;height:5px;background:#ebebeb;"></div>
<div style="position:absolute;left:491px;top:316px;width:718px;height:5px;background:#ebebeb;"></div>
<div class="rn" style="left:518.79px;top:308px">1</div>
<div style="position:absolute;left:509.4px;top:311px;width:1px;height:1px;background:#555;"></div>
<div class="rn" style="left:556.59px;top:308px">2</div>
<div style="position:absolute;left:547.19px;top:311px;width:1px;height:1px;background:#555;"></div>
<div class="rn" style="left:594.38px;top:308px">3</div>
<div style="position:absolute;left:584.99px;top:311px;width:1px;height:1px;background:#555;"></div>
<div class="rn" style="left:632.18px;top:308px">4</div>
<div style="position:absolute;left:622.78px;top:311px;width:1px;height:1px;background:#555;"></div>
<div class="rn" style="left:669.98px;top:308px">5</div>
<div style="position:absolute;left:660.58px;top:311px;width:1px;height:1px;background:#555;"></div>
<div class="rn" style="left:707.77px;top:308px">6</div>
<div style="position:absolute;left:698.37px;top:311px;width:1px;height:1px;background:#555;"></div>
<div class="rn" style="left:745.57px;top:308px">7</div>
<div style="position:absolute;left:736.17px;top:311px;width:1px;height:1px;background:#555;"></div>
<div class="rn" style="left:783.36px;top:308px">8</div>
<div style="position:absolute;left:773.96px;top:311px;width:1px;height:1px;background:#555;"></div>
<div class="rn" style="left:821.15px;top:308px">9</div>
<div style="position:absolute;left:811.76px;top:311px;width:1px;height:1px;background:#555;"></div>
<div class="rn" style="left:858.95px;top:308px">10</div>
<div style="position:absolute;left:849.55px;top:311px;width:1px;height:1px;background:#555;"></div>
<div class="rn" style="left:896.75px;top:308px">11</div>
<div style="position:absolute;left:887.35px;top:311px;width:1px;height:1px;background:#555;"></div>
<div class="rn" style="left:934.54px;top:308px">12</div>
<div style="position:absolute;left:925.14px;top:311px;width:1px;height:1px;background:#555;"></div>
<div class="rn" style="left:972.34px;top:308px">13</div>
<div style="position:absolute;left:962.94px;top:311px;width:1px;height:1px;background:#555;"></div>
<div class="rn" style="left:1010.13px;top:308px">14</div>
<div style="position:absolute;left:1000.73px;top:311px;width:1px;height:1px;background:#555;"></div>
<div class="rn" style="left:1047.93px;top:308px">15</div>
<div style="position:absolute;left:1038.53px;top:311px;width:1px;height:1px;background:#555;"></div>
<div class="rn" style="left:1085.72px;top:308px">16</div>
<div style="position:absolute;left:1076.32px;top:311px;width:1px;height:1px;background:#555;"></div>
<div class="rn" style="left:1123.51px;top:308px">17</div>
<div style="position:absolute;left:1114.12px;top:311px;width:1px;height:1px;background:#555;"></div>
<div class="rn" style="left:1161.31px;top:308px">18</div>
<div style="position:absolute;left:1151.91px;top:311px;width:1px;height:1px;background:#555;"></div>
<div class="rn" style="left:1199.11px;top:308px">19</div>
<div style="position:absolute;left:1189.71px;top:311px;width:1px;height:1px;background:#555;"></div>
<div style="position:absolute;left:372px;top:321px;width:86px;height:97px;background:#93d3fc;"></div><div style="position:absolute;left:458px;top:321px;width:9px;height:97px;background:#a0cbe8;"></div><div style="position:absolute;left:467px;top:321px;width:5.4px;height:97px;background:#93d3fc;"></div><div style="position:absolute;left:472.4px;top:321px;width:4.6px;height:97px;background:#a0cbe8;"></div><div style="position:absolute;left:477px;top:321px;width:9px;height:97px;background:#fff;"></div><div style="position:absolute;left:486px;top:321px;width:5px;height:97px;background:#a0cbe8;"></div>
<div style="position:absolute;left:372px;top:418px;width:119px;height:10px;background:#c0c0c0;"></div>
<div style="position:absolute;left:372px;top:428px;width:86px;height:451.5px;background:#ffa500;"></div><div style="position:absolute;left:458px;top:428px;width:9px;height:451.5px;background:#e9ad3c;"></div><div style="position:absolute;left:467px;top:428px;width:5.4px;height:451.5px;background:#ffa500;"></div><div style="position:absolute;left:472.4px;top:428px;width:4.6px;height:451.5px;background:#e9ad3c;"></div><div style="position:absolute;left:477px;top:428px;width:9px;height:451.5px;background:#fff;"></div><div style="position:absolute;left:486px;top:428px;width:5px;height:451.5px;background:#e9ad3c;"></div>
<div style="position:absolute;left:372px;top:879.5px;width:119px;height:9px;background:#2b579a;"></div>
<div style="position:absolute;left:372px;top:888.5px;width:86px;height:30.5px;background:#ffa500;"></div><div style="position:absolute;left:458px;top:888.5px;width:9px;height:30.5px;background:#e9ad3c;"></div><div style="position:absolute;left:467px;top:888.5px;width:5.4px;height:30.5px;background:#ffa500;"></div><div style="position:absolute;left:472.4px;top:888.5px;width:4.6px;height:30.5px;background:#e9ad3c;"></div><div style="position:absolute;left:477px;top:888.5px;width:9px;height:30.5px;background:#fff;"></div><div style="position:absolute;left:486px;top:888.5px;width:5px;height:30.5px;background:#e9ad3c;"></div>
<div class="bl" style="left:288.3px;top:367.5px">ReportTitle</div>
<div class="bl" style="left:288.3px;top:651.25px">Data</div>
<div class="bl" style="left:288.3px;top:928.6px">DataFooter1</div>
<div style="position:absolute;left:481px;top:339.4px;width:1px;height:1px;background:#555;"></div><div class="rn" style="left:472.3px;width:20px;top:354.19px">1</div><div style="position:absolute;left:481px;top:377.19px;width:1px;height:1px;background:#555;"></div><div class="rn" style="left:472.3px;width:20px;top:391.99px">2</div>
<div style="position:absolute;left:481px;top:446.4px;width:1px;height:1px;background:#555;"></div><div class="rn" style="left:472.3px;width:20px;top:461.19px">1</div><div style="position:absolute;left:481px;top:484.19px;width:1px;height:1px;background:#555;"></div><div class="rn" style="left:472.3px;width:20px;top:498.99px">2</div><div style="position:absolute;left:481px;top:521.99px;width:1px;height:1px;background:#555;"></div><div class="rn" style="left:472.3px;width:20px;top:536.78px">3</div><div style="position:absolute;left:481px;top:559.78px;width:1px;height:1px;background:#555;"></div><div class="rn" style="left:472.3px;width:20px;top:574.58px">4</div><div style="position:absolute;left:481px;top:597.58px;width:1px;height:1px;background:#555;"></div><div class="rn" style="left:472.3px;width:20px;top:612.38px">5</div><div style="position:absolute;left:481px;top:635.37px;width:1px;height:1px;background:#555;"></div><div class="rn" style="left:472.3px;width:20px;top:650.17px">6</div><div style="position:absolute;left:481px;top:673.17px;width:1px;height:1px;background:#555;"></div><div class="rn" style="left:472.3px;width:20px;top:687.97px">7</div><div style="position:absolute;left:481px;top:710.96px;width:1px;height:1px;background:#555;"></div><div class="rn" style="left:472.3px;width:20px;top:725.76px">8</div><div style="position:absolute;left:481px;top:748.76px;width:1px;height:1px;background:#555;"></div><div class="rn" style="left:472.3px;width:20px;top:763.55px">9</div><div style="position:absolute;left:481px;top:786.55px;width:1px;height:1px;background:#555;"></div><div class="rn" style="left:472.3px;width:20px;top:801.35px">10</div><div style="position:absolute;left:481px;top:824.35px;width:1px;height:1px;background:#555;"></div><div class="rn" style="left:472.3px;width:20px;top:839.14px">11</div>
<div style="position:absolute;left:481px;top:906.9px;width:1px;height:1px;background:#555;"></div>
<svg style="position:absolute;left:491px;top:321px" width="718" height="93"><defs><pattern id="g321_321" patternUnits="userSpaceOnUse" x="0" y="0" width="9.44875" height="9.44875"><rect x="0" y="0" width="1" height="1" fill="#cbcbcb"/></pattern></defs><rect width="718" height="93" fill="url(#g321_321)"/></svg>
<svg style="position:absolute;left:491px;top:456px" width="718" height="423.5"><defs><pattern id="g428_456" patternUnits="userSpaceOnUse" x="0" y="-28" width="9.44875" height="9.44875"><rect x="0" y="0" width="1" height="1" fill="#cbcbcb"/></pattern></defs><rect width="718" height="423.5" fill="url(#g428_456)"/></svg>
<svg style="position:absolute;left:491px;top:891px" width="718" height="28"><defs><pattern id="g888_891" patternUnits="userSpaceOnUse" x="0" y="-2.5" width="9.44875" height="9.44875"><rect x="0" y="0" width="1" height="1" fill="#cbcbcb"/></pattern></defs><rect width="718" height="28" fill="url(#g888_891)"/></svg>
<div class="mk" style="left:499.8px;top:330.4px;width:5px;height:1px"></div><div class="mk" style="left:499.8px;top:330.4px;width:1px;height:5px"></div><div class="mk" style="left:571.5px;top:330.4px;width:5px;height:1px"></div><div class="mk" style="left:575.5px;top:330.4px;width:1px;height:5px"></div><div class="mk" style="left:499.8px;top:404.5px;width:5px;height:1px"></div><div class="mk" style="left:499.8px;top:400.5px;width:1px;height:5px"></div><div class="mk" style="left:571.5px;top:404.5px;width:5px;height:1px"></div><div class="mk" style="left:575.5px;top:400.5px;width:1px;height:5px"></div>
<div class="mk" style="left:491px;top:339.3px;width:5px;height:1px"></div><div class="mk" style="left:491px;top:339.3px;width:1px;height:5px"></div><div class="mk" style="left:581.5px;top:339.3px;width:5px;height:1px"></div><div class="mk" style="left:585.5px;top:339.3px;width:1px;height:5px"></div><div class="mk" style="left:491px;top:358.5px;width:5px;height:1px"></div><div class="mk" style="left:491px;top:354.5px;width:1px;height:5px"></div><div class="mk" style="left:581.5px;top:358.5px;width:5px;height:1px"></div><div class="mk" style="left:585.5px;top:354.5px;width:1px;height:5px"></div>
<div class="mk" style="left:576px;top:330.4px;width:5px;height:1px"></div><div class="mk" style="left:576px;top:330.4px;width:1px;height:5px"></div><div class="mk" style="left:1005.5px;top:330.4px;width:5px;height:1px"></div><div class="mk" style="left:1009.5px;top:330.4px;width:1px;height:5px"></div><div class="mk" style="left:576px;top:404.5px;width:5px;height:1px"></div><div class="mk" style="left:576px;top:400.5px;width:1px;height:5px"></div><div class="mk" style="left:1005.5px;top:404.5px;width:5px;height:1px"></div><div class="mk" style="left:1009.5px;top:400.5px;width:1px;height:5px"></div>
<div class="mk" style="left:1095.5px;top:321px;width:5px;height:1px"></div><div class="mk" style="left:1095.5px;top:321px;width:1px;height:5px"></div><div class="mk" style="left:1167px;top:321px;width:5px;height:1px"></div><div class="mk" style="left:1171px;top:321px;width:1px;height:5px"></div><div class="mk" style="left:1095.5px;top:377px;width:5px;height:1px"></div><div class="mk" style="left:1095.5px;top:373px;width:1px;height:5px"></div><div class="mk" style="left:1167px;top:377px;width:5px;height:1px"></div><div class="mk" style="left:1171px;top:373px;width:1px;height:5px"></div>
<div class="mk" style="left:1057.4px;top:378px;width:5px;height:1px"></div><div class="mk" style="left:1057.4px;top:378px;width:1px;height:5px"></div><div class="mk" style="left:1204.5px;top:378px;width:5px;height:1px"></div><div class="mk" style="left:1208.5px;top:378px;width:1px;height:5px"></div><div class="mk" style="left:1057.4px;top:396.3px;width:5px;height:1px"></div><div class="mk" style="left:1057.4px;top:392.3px;width:1px;height:5px"></div><div class="mk" style="left:1204.5px;top:396.3px;width:5px;height:1px"></div><div class="mk" style="left:1208.5px;top:392.3px;width:1px;height:5px"></div>
<svg style="position:absolute;left:486px;top:316px" width="140" height="110" viewBox="0 0 1170 919">
<path d="M218,375 A220,220 0 0 1 655,330 C670,420 620,480 540,478 L440,478" fill="none" stroke="#9b9b9b" stroke-width="38" stroke-linecap="round"/>
<path d="M435,190 C560,190 600,290 595,360 C590,410 560,440 520,425 C490,385 450,390 410,395 C370,410 340,440 330,470 C290,430 275,380 280,330 C290,250 340,190 435,190 Z" fill="#000"/>
<rect x="378" y="437" width="115" height="72" rx="36" fill="#9b9b9b"/>
<path d="M160,730 C160,640 220,560 330,550 C380,550 400,575 435,575 C470,575 490,550 540,550 C650,560 712,640 712,710 C712,740 690,750 670,750 L190,750 C170,750 160,745 160,730 Z" fill="#000"/>
</svg>
<div class="rt" style="left:583.5px;top:358.89px;font-size:20.1px;font-weight:bold;font-style:normal;color:#0a3a7e;">Informacje o zgłoszeniu</div>
<svg style="position:absolute;left:1050px;top:316px" width="170" height="110" viewBox="0 0 1420 919">
<defs><linearGradient id="lg1" x1="0" y1="0" x2="0" y2="1"><stop offset="0" stop-color="#cfcfcf"/><stop offset="1" stop-color="#4a4a4a"/></linearGradient>
<linearGradient id="lg2" x1="0" y1="1" x2="1" y2="0"><stop offset="0" stop-color="#1d9ad6"/><stop offset="1" stop-color="#1f4a63"/></linearGradient>
<linearGradient id="lg3" x1="0" y1="0" x2="1" y2="1"><stop offset="0" stop-color="#2a7fa8"/><stop offset=".7" stop-color="#2a4352"/><stop offset="1" stop-color="#8a8a8a"/></linearGradient></defs>
<polygon points="660,75 690,175 655,335 585,368" fill="url(#lg1)"/>
<polygon points="660,75 850,270 795,288 780,230 688,172" fill="url(#lg3)"/>
<polygon points="585,368 850,270 560,465" fill="url(#lg2)"/>
</svg>
<div class="rt" style="left:1077.5px;top:381.93px;font-size:13.2px;font-weight:bold;font-style:normal;color:#000;">Infonet Projekt SA</div>
<div style="position:absolute;left:491px;top:414px;width:718px;height:3px;background:#5a5a5a;"></div>
<div style="position:absolute;left:491px;top:417px;width:718px;height:39px;background:#ebebeb;"></div>
<div class="rt" style="left:498.7px;top:436.46px;font-size:16px;font-weight:bold;font-style:italic;color:#000;">Podstawowe informacje</div>
<div class="mk" style="left:491px;top:428px;width:5px;height:1px"></div><div class="mk" style="left:491px;top:428px;width:1px;height:5px"></div><div class="mk" style="left:1204.5px;top:428px;width:5px;height:1px"></div><div class="mk" style="left:1208.5px;top:428px;width:1px;height:5px"></div><div class="mk" style="left:491px;top:455px;width:5px;height:1px"></div><div class="mk" style="left:491px;top:451px;width:1px;height:5px"></div><div class="mk" style="left:1204.5px;top:455px;width:5px;height:1px"></div><div class="mk" style="left:1208.5px;top:451px;width:1px;height:5px"></div>
<div class="rt" style="left:500px;top:483.57px;font-size:20px;font-weight:bold;font-style:normal;color:#000;">[Issues.Number]</div>
<div class="mk" style="left:491px;top:456px;width:5px;height:1px"></div><div class="mk" style="left:491px;top:456px;width:1px;height:5px"></div><div class="mk" style="left:835.5px;top:456px;width:5px;height:1px"></div><div class="mk" style="left:839.5px;top:456px;width:1px;height:5px"></div><div class="mk" style="left:491px;top:531px;width:5px;height:1px"></div><div class="mk" style="left:491px;top:527px;width:1px;height:5px"></div><div class="mk" style="left:835.5px;top:531px;width:5px;height:1px"></div><div class="mk" style="left:839.5px;top:527px;width:1px;height:5px"></div>
<div class="rt" style="left:714.4px;top:464.83px;font-size:13.2px;font-weight:normal;font-style:normal;color:#000;">test</div>
<div class="mk" style="left:707.5px;top:462.5px;width:5px;height:1px"></div><div class="mk" style="left:707.5px;top:462.5px;width:1px;height:5px"></div><div class="mk" style="left:798.5px;top:462.5px;width:5px;height:1px"></div><div class="mk" style="left:802.5px;top:462.5px;width:1px;height:5px"></div><div class="mk" style="left:707.5px;top:480.5px;width:5px;height:1px"></div><div class="mk" style="left:707.5px;top:476.5px;width:1px;height:5px"></div><div class="mk" style="left:798.5px;top:480.5px;width:5px;height:1px"></div><div class="mk" style="left:802.5px;top:476.5px;width:1px;height:5px"></div>
<div style="position:absolute;left:811px;top:462px;width:98.5px;height:20px;overflow:hidden"><div class="rt" style="left:7.5px;top:2.72px;font-size:13.33px">[Issues.Number]</div></div>
<div class="mk" style="left:811px;top:462.5px;width:5px;height:1px"></div><div class="mk" style="left:811px;top:462.5px;width:1px;height:5px"></div><div class="mk" style="left:903px;top:462.5px;width:5px;height:1px"></div><div class="mk" style="left:907px;top:462.5px;width:1px;height:5px"></div><div class="mk" style="left:811px;top:480.5px;width:5px;height:1px"></div><div class="mk" style="left:811px;top:476.5px;width:1px;height:5px"></div><div class="mk" style="left:903px;top:480.5px;width:5px;height:1px"></div><div class="mk" style="left:907px;top:476.5px;width:1px;height:5px"></div>
<div style="position:absolute;left:805.5px;top:450.5px;width:111.5px;height:37.5px;box-sizing:border-box;border:4px solid #8fd240;border-radius:7px;box-shadow:inset 0 0 4px rgba(0,0,0,.25)"></div>
<div style="position:absolute;left:1010px;top:456px;width:180px;height:18.399999999999977px;overflow:hidden"><div class="rt" style="right:5px;left:auto;top:-3.60px;font-size:10.4px;font-weight:normal;font-style:italic">Źródło zgłoszenia</div></div>
<div style="position:absolute;left:1010px;top:474.4px;width:180px;height:20.0px;overflow:hidden"><div class="rt" style="right:5px;left:auto;top:2.71px;font-size:13.1px;font-weight:bold;font-style:normal">[Issues.CommunicationChannelName]</div></div>
<div style="position:absolute;left:1010px;top:494.4px;width:180px;height:18.399999999999977px;overflow:hidden"><div class="rt" style="right:5px;left:auto;top:8.40px;font-size:10.4px;font-weight:normal;font-style:italic">Data utworzenia</div></div>
<div style="position:absolute;left:1010px;top:512.8px;width:180px;height:18.90000000000009px;overflow:hidden"><div class="rt" style="right:5px;left:auto;top:1.91px;font-size:13.1px;font-weight:bold;font-style:normal">[Issues.CreatedDate]</div></div>
<div class="mk" style="left:1010px;top:456px;width:5px;height:1px"></div><div class="mk" style="left:1010px;top:456px;width:1px;height:5px"></div><div class="mk" style="left:1185.5px;top:456px;width:5px;height:1px"></div><div class="mk" style="left:1189.5px;top:456px;width:1px;height:5px"></div><div class="mk" style="left:1010px;top:473.5px;width:5px;height:1px"></div><div class="mk" style="left:1010px;top:469.5px;width:1px;height:5px"></div><div class="mk" style="left:1185.5px;top:473.5px;width:5px;height:1px"></div><div class="mk" style="left:1189.5px;top:469.5px;width:1px;height:5px"></div>
<div class="mk" style="left:1010px;top:474.5px;width:5px;height:1px"></div><div class="mk" style="left:1010px;top:474.5px;width:1px;height:5px"></div><div class="mk" style="left:1185.5px;top:474.5px;width:5px;height:1px"></div><div class="mk" style="left:1189.5px;top:474.5px;width:1px;height:5px"></div><div class="mk" style="left:1010px;top:493.5px;width:5px;height:1px"></div><div class="mk" style="left:1010px;top:489.5px;width:1px;height:5px"></div><div class="mk" style="left:1185.5px;top:493.5px;width:5px;height:1px"></div><div class="mk" style="left:1189.5px;top:489.5px;width:1px;height:5px"></div>
<div class="mk" style="left:1010px;top:494.5px;width:5px;height:1px"></div><div class="mk" style="left:1010px;top:494.5px;width:1px;height:5px"></div><div class="mk" style="left:1185.5px;top:494.5px;width:5px;height:1px"></div><div class="mk" style="left:1189.5px;top:494.5px;width:1px;height:5px"></div><div class="mk" style="left:1010px;top:512px;width:5px;height:1px"></div><div class="mk" style="left:1010px;top:508px;width:1px;height:5px"></div><div class="mk" style="left:1185.5px;top:512px;width:5px;height:1px"></div><div class="mk" style="left:1189.5px;top:508px;width:1px;height:5px"></div>
<div class="mk" style="left:1010px;top:513px;width:5px;height:1px"></div><div class="mk" style="left:1010px;top:513px;width:1px;height:5px"></div><div class="mk" style="left:1185.5px;top:513px;width:5px;height:1px"></div><div class="mk" style="left:1189.5px;top:513px;width:1px;height:5px"></div><div class="mk" style="left:1010px;top:531px;width:5px;height:1px"></div><div class="mk" style="left:1010px;top:527px;width:1px;height:5px"></div><div class="mk" style="left:1185.5px;top:531px;width:5px;height:1px"></div><div class="mk" style="left:1189.5px;top:527px;width:1px;height:5px"></div>
<div class="mk" style="left:491px;top:550.4px;width:5px;height:1px"></div><div class="mk" style="left:491px;top:550.4px;width:1px;height:5px"></div><div class="mk" style="left:505.5px;top:550.4px;width:5px;height:1px"></div><div class="mk" style="left:509.5px;top:550.4px;width:1px;height:5px"></div><div class="mk" style="left:491px;top:568.9px;width:5px;height:1px"></div><div class="mk" style="left:491px;top:564.9px;width:1px;height:5px"></div><div class="mk" style="left:505.5px;top:568.9px;width:5px;height:1px"></div><div class="mk" style="left:509.5px;top:564.9px;width:1px;height:5px"></div>
<div class="mk" style="left:518.7px;top:550.4px;width:5px;height:1px"></div><div class="mk" style="left:518.7px;top:550.4px;width:1px;height:5px"></div><div class="mk" style="left:590.5px;top:550.4px;width:5px;height:1px"></div><div class="mk" style="left:594.5px;top:550.4px;width:1px;height:5px"></div><div class="mk" style="left:518.7px;top:568.9px;width:5px;height:1px"></div><div class="mk" style="left:518.7px;top:564.9px;width:1px;height:5px"></div><div class="mk" style="left:590.5px;top:568.9px;width:5px;height:1px"></div><div class="mk" style="left:594.5px;top:564.9px;width:1px;height:5px"></div>
<div class="rt" style="left:526.5px;top:552.67px;font-size:13.33px;font-weight:bold;font-style:italic;color:#000;">Temat</div>
<div class="rt" style="left:601.5px;top:552.78px;font-size:13.2px;font-weight:normal;font-style:normal;color:#000;">[Issues.Subject]</div>
<div class="mk" style="left:595px;top:550.4px;width:5px;height:1px"></div><div class="mk" style="left:595px;top:550.4px;width:1px;height:5px"></div><div class="mk" style="left:1185.5px;top:550.4px;width:5px;height:1px"></div><div class="mk" style="left:1189.5px;top:550.4px;width:1px;height:5px"></div><div class="mk" style="left:595px;top:568.9px;width:5px;height:1px"></div><div class="mk" style="left:595px;top:564.9px;width:1px;height:5px"></div><div class="mk" style="left:1185.5px;top:568.9px;width:5px;height:1px"></div><div class="mk" style="left:1189.5px;top:564.9px;width:1px;height:5px"></div>
<div class="mk" style="left:491px;top:578.75px;width:5px;height:1px"></div><div class="mk" style="left:491px;top:578.75px;width:1px;height:5px"></div><div class="mk" style="left:505.5px;top:578.75px;width:5px;height:1px"></div><div class="mk" style="left:509.5px;top:578.75px;width:1px;height:5px"></div><div class="mk" style="left:491px;top:597.25px;width:5px;height:1px"></div><div class="mk" style="left:491px;top:593.25px;width:1px;height:5px"></div><div class="mk" style="left:505.5px;top:597.25px;width:5px;height:1px"></div><div class="mk" style="left:509.5px;top:593.25px;width:1px;height:5px"></div>
<div class="mk" style="left:518.7px;top:578.75px;width:5px;height:1px"></div><div class="mk" style="left:518.7px;top:578.75px;width:1px;height:5px"></div><div class="mk" style="left:590.5px;top:578.75px;width:5px;height:1px"></div><div class="mk" style="left:594.5px;top:578.75px;width:1px;height:5px"></div><div class="mk" style="left:518.7px;top:597.25px;width:5px;height:1px"></div><div class="mk" style="left:518.7px;top:593.25px;width:1px;height:5px"></div><div class="mk" style="left:590.5px;top:597.25px;width:5px;height:1px"></div><div class="mk" style="left:594.5px;top:593.25px;width:1px;height:5px"></div>
<div class="rt" style="left:526.5px;top:581.02px;font-size:13.33px;font-weight:bold;font-style:italic;color:#000;">Kategoria</div>
<div class="rt" style="left:601.5px;top:581.13px;font-size:13.2px;font-weight:normal;font-style:normal;color:#000;">[Issues.IssueCategoryName]</div>
<div class="mk" style="left:595px;top:578.75px;width:5px;height:1px"></div><div class="mk" style="left:595px;top:578.75px;width:1px;height:5px"></div><div class="mk" style="left:1185.5px;top:578.75px;width:5px;height:1px"></div><div class="mk" style="left:1189.5px;top:578.75px;width:1px;height:5px"></div><div class="mk" style="left:595px;top:597.25px;width:5px;height:1px"></div><div class="mk" style="left:595px;top:593.25px;width:1px;height:5px"></div><div class="mk" style="left:1185.5px;top:597.25px;width:5px;height:1px"></div><div class="mk" style="left:1189.5px;top:593.25px;width:1px;height:5px"></div>
<div class="mk" style="left:491px;top:607.1px;width:5px;height:1px"></div><div class="mk" style="left:491px;top:607.1px;width:1px;height:5px"></div><div class="mk" style="left:505.5px;top:607.1px;width:5px;height:1px"></div><div class="mk" style="left:509.5px;top:607.1px;width:1px;height:5px"></div><div class="mk" style="left:491px;top:625.6px;width:5px;height:1px"></div><div class="mk" style="left:491px;top:621.6px;width:1px;height:5px"></div><div class="mk" style="left:505.5px;top:625.6px;width:5px;height:1px"></div><div class="mk" style="left:509.5px;top:621.6px;width:1px;height:5px"></div>
<div class="mk" style="left:518.7px;top:607.1px;width:5px;height:1px"></div><div class="mk" style="left:518.7px;top:607.1px;width:1px;height:5px"></div><div class="mk" style="left:590.5px;top:607.1px;width:5px;height:1px"></div><div class="mk" style="left:594.5px;top:607.1px;width:1px;height:5px"></div><div class="mk" style="left:518.7px;top:625.6px;width:5px;height:1px"></div><div class="mk" style="left:518.7px;top:621.6px;width:1px;height:5px"></div><div class="mk" style="left:590.5px;top:625.6px;width:5px;height:1px"></div><div class="mk" style="left:594.5px;top:621.6px;width:1px;height:5px"></div>
<div class="rt" style="left:526.5px;top:609.37px;font-size:13.33px;font-weight:bold;font-style:italic;color:#000;">Status</div>
<div class="rt" style="left:601.5px;top:609.48px;font-size:13.2px;font-weight:normal;font-style:normal;color:#000;">[Issues.IssueStatusName]</div>
<div class="mk" style="left:595px;top:607.1px;width:5px;height:1px"></div><div class="mk" style="left:595px;top:607.1px;width:1px;height:5px"></div><div class="mk" style="left:827px;top:607.1px;width:5px;height:1px"></div><div class="mk" style="left:831px;top:607.1px;width:1px;height:5px"></div><div class="mk" style="left:595px;top:625.6px;width:5px;height:1px"></div><div class="mk" style="left:595px;top:621.6px;width:1px;height:5px"></div><div class="mk" style="left:827px;top:625.6px;width:5px;height:1px"></div><div class="mk" style="left:831px;top:621.6px;width:1px;height:5px"></div>
<div class="mk" style="left:849.5px;top:607.1px;width:5px;height:1px"></div><div class="mk" style="left:849.5px;top:607.1px;width:1px;height:5px"></div><div class="mk" style="left:864.5px;top:607.1px;width:5px;height:1px"></div><div class="mk" style="left:868.5px;top:607.1px;width:1px;height:5px"></div><div class="mk" style="left:849.5px;top:625.6px;width:5px;height:1px"></div><div class="mk" style="left:849.5px;top:621.6px;width:1px;height:5px"></div><div class="mk" style="left:864.5px;top:625.6px;width:5px;height:1px"></div><div class="mk" style="left:868.5px;top:621.6px;width:1px;height:5px"></div>
<div class="mk" style="left:878px;top:607.1px;width:5px;height:1px"></div><div class="mk" style="left:878px;top:607.1px;width:1px;height:5px"></div><div class="mk" style="left:949.5px;top:607.1px;width:5px;height:1px"></div><div class="mk" style="left:953.5px;top:607.1px;width:1px;height:5px"></div><div class="mk" style="left:878px;top:625.6px;width:5px;height:1px"></div><div class="mk" style="left:878px;top:621.6px;width:1px;height:5px"></div><div class="mk" style="left:949.5px;top:625.6px;width:5px;height:1px"></div><div class="mk" style="left:953.5px;top:621.6px;width:1px;height:5px"></div>
<div class="mk" style="left:954px;top:607.1px;width:5px;height:1px"></div><div class="mk" style="left:954px;top:607.1px;width:1px;height:5px"></div><div class="mk" style="left:1185.5px;top:607.1px;width:5px;height:1px"></div><div class="mk" style="left:1189.5px;top:607.1px;width:1px;height:5px"></div><div class="mk" style="left:954px;top:625.6px;width:5px;height:1px"></div><div class="mk" style="left:954px;top:621.6px;width:1px;height:5px"></div><div class="mk" style="left:1185.5px;top:625.6px;width:5px;height:1px"></div><div class="mk" style="left:1189.5px;top:621.6px;width:1px;height:5px"></div>
<div class="rt" style="left:885.2px;top:609.37px;font-size:13.33px;font-weight:bold;font-style:italic;color:#000;">Wpływ</div>
<div class="rt" style="left:960.6px;top:609.48px;font-size:13.2px;font-weight:normal;font-style:normal;color:#000;">[Issues.IssueImpactName]</div>
<div class="mk" style="left:491px;top:635.45px;width:5px;height:1px"></div><div class="mk" style="left:491px;top:635.45px;width:1px;height:5px"></div><div class="mk" style="left:505.5px;top:635.45px;width:5px;height:1px"></div><div class="mk" style="left:509.5px;top:635.45px;width:1px;height:5px"></div><div class="mk" style="left:491px;top:653.95px;width:5px;height:1px"></div><div class="mk" style="left:491px;top:649.95px;width:1px;height:5px"></div><div class="mk" style="left:505.5px;top:653.95px;width:5px;height:1px"></div><div class="mk" style="left:509.5px;top:649.95px;width:1px;height:5px"></div>
<div class="mk" style="left:518.7px;top:635.45px;width:5px;height:1px"></div><div class="mk" style="left:518.7px;top:635.45px;width:1px;height:5px"></div><div class="mk" style="left:590.5px;top:635.45px;width:5px;height:1px"></div><div class="mk" style="left:594.5px;top:635.45px;width:1px;height:5px"></div><div class="mk" style="left:518.7px;top:653.95px;width:5px;height:1px"></div><div class="mk" style="left:518.7px;top:649.95px;width:1px;height:5px"></div><div class="mk" style="left:590.5px;top:653.95px;width:5px;height:1px"></div><div class="mk" style="left:594.5px;top:649.95px;width:1px;height:5px"></div>
<div class="rt" style="left:526.5px;top:637.72px;font-size:13.33px;font-weight:bold;font-style:italic;color:#000;">Priorytet</div>
<div class="rt" style="left:601.5px;top:637.83px;font-size:13.2px;font-weight:normal;font-style:normal;color:#000;">[Issues.IssuePriorityName]</div>
<div class="mk" style="left:595px;top:635.45px;width:5px;height:1px"></div><div class="mk" style="left:595px;top:635.45px;width:1px;height:5px"></div><div class="mk" style="left:827px;top:635.45px;width:5px;height:1px"></div><div class="mk" style="left:831px;top:635.45px;width:1px;height:5px"></div><div class="mk" style="left:595px;top:653.95px;width:5px;height:1px"></div><div class="mk" style="left:595px;top:649.95px;width:1px;height:5px"></div><div class="mk" style="left:827px;top:653.95px;width:5px;height:1px"></div><div class="mk" style="left:831px;top:649.95px;width:1px;height:5px"></div>
<div class="mk" style="left:849.5px;top:635.45px;width:5px;height:1px"></div><div class="mk" style="left:849.5px;top:635.45px;width:1px;height:5px"></div><div class="mk" style="left:864.5px;top:635.45px;width:5px;height:1px"></div><div class="mk" style="left:868.5px;top:635.45px;width:1px;height:5px"></div><div class="mk" style="left:849.5px;top:653.95px;width:5px;height:1px"></div><div class="mk" style="left:849.5px;top:649.95px;width:1px;height:5px"></div><div class="mk" style="left:864.5px;top:653.95px;width:5px;height:1px"></div><div class="mk" style="left:868.5px;top:649.95px;width:1px;height:5px"></div>
<div class="mk" style="left:878px;top:635.45px;width:5px;height:1px"></div><div class="mk" style="left:878px;top:635.45px;width:1px;height:5px"></div><div class="mk" style="left:949.5px;top:635.45px;width:5px;height:1px"></div><div class="mk" style="left:953.5px;top:635.45px;width:1px;height:5px"></div><div class="mk" style="left:878px;top:653.95px;width:5px;height:1px"></div><div class="mk" style="left:878px;top:649.95px;width:1px;height:5px"></div><div class="mk" style="left:949.5px;top:653.95px;width:5px;height:1px"></div><div class="mk" style="left:953.5px;top:649.95px;width:1px;height:5px"></div>
<div class="mk" style="left:954px;top:635.45px;width:5px;height:1px"></div><div class="mk" style="left:954px;top:635.45px;width:1px;height:5px"></div><div class="mk" style="left:1185.5px;top:635.45px;width:5px;height:1px"></div><div class="mk" style="left:1189.5px;top:635.45px;width:1px;height:5px"></div><div class="mk" style="left:954px;top:653.95px;width:5px;height:1px"></div><div class="mk" style="left:954px;top:649.95px;width:1px;height:5px"></div><div class="mk" style="left:1185.5px;top:653.95px;width:5px;height:1px"></div><div class="mk" style="left:1189.5px;top:649.95px;width:1px;height:5px"></div>
<div class="rt" style="left:885.2px;top:637.72px;font-size:13.33px;font-weight:bold;font-style:italic;color:#000;">Pilność</div>
<div class="rt" style="left:960.6px;top:637.83px;font-size:13.2px;font-weight:normal;font-style:normal;color:#000;">[Issues.IssueUrgencyName]</div>
<div style="position:absolute;left:491px;top:670.8px;width:718px;height:3px;background:#5a5a5a;"></div>
<div style="position:absolute;left:491px;top:673.8px;width:718px;height:27.3px;background:#ebebeb;"></div>
<div class="rt" style="left:498.7px;top:682.06px;font-size:16px;font-weight:bold;font-style:italic;color:#000;">Powiązane osoby</div>
<div class="mk" style="left:491px;top:673.5px;width:5px;height:1px"></div><div class="mk" style="left:491px;top:673.5px;width:1px;height:5px"></div><div class="mk" style="left:1204.5px;top:673.5px;width:5px;height:1px"></div><div class="mk" style="left:1208.5px;top:673.5px;width:1px;height:5px"></div><div class="mk" style="left:491px;top:700px;width:5px;height:1px"></div><div class="mk" style="left:491px;top:696px;width:1px;height:5px"></div><div class="mk" style="left:1204.5px;top:700px;width:5px;height:1px"></div><div class="mk" style="left:1208.5px;top:696px;width:1px;height:5px"></div>
<div class="mk" style="left:491px;top:720.8px;width:5px;height:1px"></div><div class="mk" style="left:491px;top:720.8px;width:1px;height:5px"></div><div class="mk" style="left:505.5px;top:720.8px;width:5px;height:1px"></div><div class="mk" style="left:509.5px;top:720.8px;width:1px;height:5px"></div><div class="mk" style="left:491px;top:739.0999999999999px;width:5px;height:1px"></div><div class="mk" style="left:491px;top:735.0999999999999px;width:1px;height:5px"></div><div class="mk" style="left:505.5px;top:739.0999999999999px;width:5px;height:1px"></div><div class="mk" style="left:509.5px;top:735.0999999999999px;width:1px;height:5px"></div>
<div class="mk" style="left:519px;top:720.8px;width:5px;height:1px"></div><div class="mk" style="left:519px;top:720.8px;width:1px;height:5px"></div><div class="mk" style="left:646.5px;top:720.8px;width:5px;height:1px"></div><div class="mk" style="left:650.5px;top:720.8px;width:1px;height:5px"></div><div class="mk" style="left:519px;top:739.0999999999999px;width:5px;height:1px"></div><div class="mk" style="left:519px;top:735.0999999999999px;width:1px;height:5px"></div><div class="mk" style="left:646.5px;top:739.0999999999999px;width:5px;height:1px"></div><div class="mk" style="left:650.5px;top:735.0999999999999px;width:1px;height:5px"></div>
<div class="mk" style="left:651px;top:720.8px;width:5px;height:1px"></div><div class="mk" style="left:651px;top:720.8px;width:1px;height:5px"></div><div class="mk" style="left:826.5px;top:720.8px;width:5px;height:1px"></div><div class="mk" style="left:830.5px;top:720.8px;width:1px;height:5px"></div><div class="mk" style="left:651px;top:739.0999999999999px;width:5px;height:1px"></div><div class="mk" style="left:651px;top:735.0999999999999px;width:1px;height:5px"></div><div class="mk" style="left:826.5px;top:739.0999999999999px;width:5px;height:1px"></div><div class="mk" style="left:830.5px;top:735.0999999999999px;width:1px;height:5px"></div>
<div class="mk" style="left:849.8px;top:720.8px;width:5px;height:1px"></div><div class="mk" style="left:849.8px;top:720.8px;width:1px;height:5px"></div><div class="mk" style="left:864.5px;top:720.8px;width:5px;height:1px"></div><div class="mk" style="left:868.5px;top:720.8px;width:1px;height:5px"></div><div class="mk" style="left:849.8px;top:739.0999999999999px;width:5px;height:1px"></div><div class="mk" style="left:849.8px;top:735.0999999999999px;width:1px;height:5px"></div><div class="mk" style="left:864.5px;top:739.0999999999999px;width:5px;height:1px"></div><div class="mk" style="left:868.5px;top:735.0999999999999px;width:1px;height:5px"></div>
<div class="mk" style="left:878px;top:720.8px;width:5px;height:1px"></div><div class="mk" style="left:878px;top:720.8px;width:1px;height:5px"></div><div class="mk" style="left:1005.5px;top:720.8px;width:5px;height:1px"></div><div class="mk" style="left:1009.5px;top:720.8px;width:1px;height:5px"></div><div class="mk" style="left:878px;top:739.0999999999999px;width:5px;height:1px"></div><div class="mk" style="left:878px;top:735.0999999999999px;width:1px;height:5px"></div><div class="mk" style="left:1005.5px;top:739.0999999999999px;width:5px;height:1px"></div><div class="mk" style="left:1009.5px;top:735.0999999999999px;width:1px;height:5px"></div>
<div class="mk" style="left:1010px;top:720.8px;width:5px;height:1px"></div><div class="mk" style="left:1010px;top:720.8px;width:1px;height:5px"></div><div class="mk" style="left:1187px;top:720.8px;width:5px;height:1px"></div><div class="mk" style="left:1191px;top:720.8px;width:1px;height:5px"></div><div class="mk" style="left:1010px;top:739.0999999999999px;width:5px;height:1px"></div><div class="mk" style="left:1010px;top:735.0999999999999px;width:1px;height:5px"></div><div class="mk" style="left:1187px;top:739.0999999999999px;width:5px;height:1px"></div><div class="mk" style="left:1191px;top:735.0999999999999px;width:1px;height:5px"></div>
<div class="rt" style="left:526.3px;top:721.52px;font-size:13.33px;font-weight:bold;font-style:italic;color:#000;">Zgłaszający</div>
<div class="rt" style="left:657.8px;top:721.63px;font-size:13.2px;font-weight:normal;font-style:normal;color:#000;">[Issues.ReporterFullName]</div>
<div class="rt" style="left:885px;top:721.52px;font-size:13.33px;font-weight:bold;font-style:italic;color:#000;">Grupa opiekunów</div>
<div style="position:absolute;left:1010px;top:720.8px;width:181px;height:20px;overflow:hidden"><div class="rt" style="left:6.7px;top:0.83px;font-size:13.2px">[Issues.AssigneeGroupName]</div></div>
<div class="mk" style="left:491px;top:749.15px;width:5px;height:1px"></div><div class="mk" style="left:491px;top:749.15px;width:1px;height:5px"></div><div class="mk" style="left:505.5px;top:749.15px;width:5px;height:1px"></div><div class="mk" style="left:509.5px;top:749.15px;width:1px;height:5px"></div><div class="mk" style="left:491px;top:767.4499999999999px;width:5px;height:1px"></div><div class="mk" style="left:491px;top:763.4499999999999px;width:1px;height:5px"></div><div class="mk" style="left:505.5px;top:767.4499999999999px;width:5px;height:1px"></div><div class="mk" style="left:509.5px;top:763.4499999999999px;width:1px;height:5px"></div>
<div class="mk" style="left:519px;top:749.15px;width:5px;height:1px"></div><div class="mk" style="left:519px;top:749.15px;width:1px;height:5px"></div><div class="mk" style="left:646.5px;top:749.15px;width:5px;height:1px"></div><div class="mk" style="left:650.5px;top:749.15px;width:1px;height:5px"></div><div class="mk" style="left:519px;top:767.4499999999999px;width:5px;height:1px"></div><div class="mk" style="left:519px;top:763.4499999999999px;width:1px;height:5px"></div><div class="mk" style="left:646.5px;top:767.4499999999999px;width:5px;height:1px"></div><div class="mk" style="left:650.5px;top:763.4499999999999px;width:1px;height:5px"></div>
<div class="mk" style="left:651px;top:749.15px;width:5px;height:1px"></div><div class="mk" style="left:651px;top:749.15px;width:1px;height:5px"></div><div class="mk" style="left:826.5px;top:749.15px;width:5px;height:1px"></div><div class="mk" style="left:830.5px;top:749.15px;width:1px;height:5px"></div><div class="mk" style="left:651px;top:767.4499999999999px;width:5px;height:1px"></div><div class="mk" style="left:651px;top:763.4499999999999px;width:1px;height:5px"></div><div class="mk" style="left:826.5px;top:767.4499999999999px;width:5px;height:1px"></div><div class="mk" style="left:830.5px;top:763.4499999999999px;width:1px;height:5px"></div>
<div class="mk" style="left:849.8px;top:749.15px;width:5px;height:1px"></div><div class="mk" style="left:849.8px;top:749.15px;width:1px;height:5px"></div><div class="mk" style="left:864.5px;top:749.15px;width:5px;height:1px"></div><div class="mk" style="left:868.5px;top:749.15px;width:1px;height:5px"></div><div class="mk" style="left:849.8px;top:767.4499999999999px;width:5px;height:1px"></div><div class="mk" style="left:849.8px;top:763.4499999999999px;width:1px;height:5px"></div><div class="mk" style="left:864.5px;top:767.4499999999999px;width:5px;height:1px"></div><div class="mk" style="left:868.5px;top:763.4499999999999px;width:1px;height:5px"></div>
<div class="mk" style="left:878px;top:749.15px;width:5px;height:1px"></div><div class="mk" style="left:878px;top:749.15px;width:1px;height:5px"></div><div class="mk" style="left:1005.5px;top:749.15px;width:5px;height:1px"></div><div class="mk" style="left:1009.5px;top:749.15px;width:1px;height:5px"></div><div class="mk" style="left:878px;top:767.4499999999999px;width:5px;height:1px"></div><div class="mk" style="left:878px;top:763.4499999999999px;width:1px;height:5px"></div><div class="mk" style="left:1005.5px;top:767.4499999999999px;width:5px;height:1px"></div><div class="mk" style="left:1009.5px;top:763.4499999999999px;width:1px;height:5px"></div>
<div class="mk" style="left:1010px;top:749.15px;width:5px;height:1px"></div><div class="mk" style="left:1010px;top:749.15px;width:1px;height:5px"></div><div class="mk" style="left:1187px;top:749.15px;width:5px;height:1px"></div><div class="mk" style="left:1191px;top:749.15px;width:1px;height:5px"></div><div class="mk" style="left:1010px;top:767.4499999999999px;width:5px;height:1px"></div><div class="mk" style="left:1010px;top:763.4499999999999px;width:1px;height:5px"></div><div class="mk" style="left:1187px;top:767.4499999999999px;width:5px;height:1px"></div><div class="mk" style="left:1191px;top:763.4499999999999px;width:1px;height:5px"></div>
<div class="rt" style="left:526.3px;top:749.87px;font-size:13.33px;font-weight:bold;font-style:italic;color:#000;">Autor</div>
<div class="rt" style="left:657.8px;top:749.98px;font-size:13.2px;font-weight:normal;font-style:normal;color:#000;">[Issues.AuthorFullName]</div>
<div class="rt" style="left:885px;top:749.87px;font-size:13.33px;font-weight:bold;font-style:italic;color:#000;">Opiekunowie</div>
<div style="position:absolute;left:1010px;top:749.15px;width:181px;height:20px;overflow:hidden"><div class="rt" style="left:6.7px;top:0.83px;font-size:13.2px">[Issues.AssigneePersonName]</div></div>
<div style="position:absolute;left:491px;top:795.2px;width:718px;height:3.2px;background:#5a5a5a;"></div>
<div style="position:absolute;left:491px;top:798.4px;width:718px;height:26px;background:#ebebeb;"></div>
<div class="rt" style="left:498.7px;top:805.46px;font-size:16px;font-weight:bold;font-style:italic;color:#000;">Opis</div>
<div class="mk" style="left:491px;top:798.4px;width:5px;height:1px"></div><div class="mk" style="left:491px;top:798.4px;width:1px;height:5px"></div><div class="mk" style="left:1204.5px;top:798.4px;width:5px;height:1px"></div><div class="mk" style="left:1208.5px;top:798.4px;width:1px;height:5px"></div><div class="mk" style="left:491px;top:823.5px;width:5px;height:1px"></div><div class="mk" style="left:491px;top:819.5px;width:1px;height:5px"></div><div class="mk" style="left:1204.5px;top:823.5px;width:5px;height:1px"></div><div class="mk" style="left:1208.5px;top:819.5px;width:1px;height:5px"></div>
<div class="rt" style="left:793.5px;top:835.33px;font-size:13.2px;font-weight:normal;font-style:normal;color:#000;">[Issues.Description]</div>
<div class="mk" style="left:491px;top:833.5px;width:5px;height:1px"></div><div class="mk" style="left:491px;top:833.5px;width:1px;height:5px"></div><div class="mk" style="left:1204.5px;top:833.5px;width:5px;height:1px"></div><div class="mk" style="left:1208.5px;top:833.5px;width:1px;height:5px"></div><div class="mk" style="left:491px;top:851px;width:5px;height:1px"></div><div class="mk" style="left:491px;top:847px;width:1px;height:5px"></div><div class="mk" style="left:1204.5px;top:851px;width:5px;height:1px"></div><div class="mk" style="left:1208.5px;top:847px;width:1px;height:5px"></div>
<div style="position:absolute;left:491px;top:879.5px;width:718px;height:8.5px;background:#bccadc;"></div>
<div style="position:absolute;left:491px;top:888px;width:718px;height:3px;background:#5a5a5a;"></div>
<div style="position:absolute;left:491px;top:891px;width:718px;height:28px;background:#ebebeb;"></div>
<div class="rt" style="left:498px;top:898.06px;font-size:16px;font-weight:bold;font-style:normal;color:#000;">Uprawnienia / Dostępy</div>
<div class="mk" style="left:491px;top:891px;width:5px;height:1px"></div><div class="mk" style="left:491px;top:891px;width:1px;height:5px"></div><div class="mk" style="left:1204.5px;top:891px;width:5px;height:1px"></div><div class="mk" style="left:1208.5px;top:891px;width:1px;height:5px"></div><div class="mk" style="left:491px;top:924px;width:5px;height:1px"></div><div class="mk" style="left:491px;top:920px;width:1px;height:5px"></div><div class="mk" style="left:1204.5px;top:924px;width:5px;height:1px"></div><div class="mk" style="left:1208.5px;top:920px;width:1px;height:5px"></div>
<div style="position:absolute;left:490px;top:320px;width:720px;height:2px;background:repeating-linear-gradient(90deg,#aaa 0 3px,rgba(170,170,170,.35) 3px 5px)"></div>
<div style="position:absolute;left:490px;top:320px;width:1px;height:600px;background:repeating-linear-gradient(180deg,#9a9a9a 0 3px,rgba(170,170,170,.3) 3px 5px)"></div>
<div style="position:absolute;left:1208.3px;top:320px;width:1.6px;height:600px;background:repeating-linear-gradient(180deg,#aaa 0 3px,rgba(170,170,170,.3) 3px 5px)"></div>
<svg style="position:absolute;left:491px;top:550.6px" width="19" height="19" viewBox="0 0 19 19"><defs><clipPath id="lbc"><circle cx="9.4" cy="9.4" r="8.7"/></clipPath></defs><circle cx="9.4" cy="9.4" r="8.7" fill="#9c9c9c"/><g clip-path="url(#lbc)"><line x1="11.17" y1="11.17" x2="16.12" y2="16.12" stroke="#000" stroke-width="3.4"/><line x1="7.63" y1="11.17" x2="2.68" y2="16.12" stroke="#000" stroke-width="3.4"/><line x1="7.63" y1="7.63" x2="2.68" y2="2.68" stroke="#000" stroke-width="3.4"/><line x1="11.17" y1="7.63" x2="16.12" y2="2.68" stroke="#000" stroke-width="3.4"/></g><circle cx="9.4" cy="9.4" r="3.4" fill="#fff"/></svg>
<svg style="position:absolute;left:490.5px;top:579.5px" width="19" height="17" viewBox="0 0 19 17"><rect x="1" y="1" width="6.5" height="6" fill="none" stroke="#a0a0a0" stroke-width="1.3"/><rect x="12.2" y="9" width="6.2" height="6" fill="none" stroke="#a0a0a0" stroke-width="1.3"/><rect x="5.2" y="3.8" width="9" height="9" rx="1.5" fill="#000"/></svg>
<svg style="position:absolute;left:491px;top:607px" width="19" height="19" viewBox="0 0 19 19"><rect x="1.2" y="1" width="2.6" height="17.5" rx="1" fill="#000"/><path d="M3.8,3 C7,2.4 9,4.2 12,3.6 C14,3.2 15,2.6 19,2.8 L19,14.2 C15.5,14 14,15 12,15.2 C9,15.5 7,13.5 3.8,14 Z" fill="#9c9c9c"/></svg>
<svg style="position:absolute;left:491px;top:635.6px" width="19" height="19" viewBox="0 0 19 19"><text x="0.5" y="6.2" font-family="Liberation Sans" font-weight="bold" font-size="6.5" fill="#000">1</text><rect x="6.3" y="2.6" width="12.5" height="1.8" fill="#9c9c9c"/><text x="0.5" y="12.0" font-family="Liberation Sans" font-weight="bold" font-size="6.5" fill="#000">2</text><rect x="6.3" y="8.4" width="12.5" height="1.8" fill="#9c9c9c"/><text x="0.5" y="17.8" font-family="Liberation Sans" font-weight="bold" font-size="6.5" fill="#000">3</text><rect x="6.3" y="14.2" width="12.5" height="1.8" fill="#9c9c9c"/></svg>
<svg style="position:absolute;left:849.5px;top:607.3px" width="20" height="20" viewBox="0 0 20 20"><path d="M1.2,1.2 L6.5,6.5" stroke="#000" stroke-width="2.2"/><path d="M8.6,8.6 L8.6,2.8 L2.8,8.6 Z" fill="#000"/><path d="M18.6,18.6 L13.3,13.3" stroke="#000" stroke-width="2.2"/><path d="M11.2,11.2 L11.2,17 L17,11.2 Z" fill="#000"/><path d="M18.6,1.2 L13.3,6.5" stroke="#9c9c9c" stroke-width="2.2"/><path d="M11.2,8.6 L17,8.6 L11.2,2.8 Z" fill="#9c9c9c"/><path d="M1.2,18.6 L6.5,13.3" stroke="#9c9c9c" stroke-width="2.2"/><path d="M8.6,11.2 L2.8,11.2 L8.6,17 Z" fill="#9c9c9c"/></svg>
<svg style="position:absolute;left:849.5px;top:635.6px" width="20" height="20" viewBox="0 0 20 20"><path d="M7.2,1 L12.2,1 L11.4,13 L8,13 Z" fill="#000"/><circle cx="9.7" cy="16.2" r="2.4" fill="#9c9c9c"/></svg>
<svg style="position:absolute;left:490.5px;top:720.5px" width="20" height="20" viewBox="0 0 20 20"><circle cx="7.2" cy="4.7" r="3.5" fill="#000"/><path d="M1.0,14.7 L1.0,11.7 C1.0,9.6 3.0,9.1 4.2,9.1 C5.7,10.1 8.7,10.1 10.2,9.1 C11.4,9.1 13.4,9.6 13.4,11.7 L13.4,14.7 Z" fill="#000"/><path d="M12,8.5 L16,8.5 L19.5,12.5 L15.5,16.8 L11.5,12.8 Z" fill="#a0a0a0" stroke="#fff" stroke-width="0.9"/><circle cx="13.6" cy="10.5" r="0.8" fill="#ddd"/></svg>
<svg style="position:absolute;left:490.5px;top:749px" width="20" height="20" viewBox="0 0 20 20"><circle cx="7.2" cy="4.7" r="3.5" fill="#000"/><path d="M1.0,14.7 L1.0,11.7 C1.0,9.6 3.0,9.1 4.2,9.1 C5.7,10.1 8.7,10.1 10.2,9.1 C11.4,9.1 13.4,9.6 13.4,11.7 L13.4,14.7 Z" fill="#000"/><path d="M10,18 L11,14.5 L17.5,8 L19.5,10 L13,16.5 Z" fill="#a0a0a0" stroke="#fff" stroke-width="0.9"/></svg>
<svg style="position:absolute;left:849.5px;top:720.5px" width="20" height="20" viewBox="0 0 20 20"><path d="M2.5,7.5 L2.5,2.2 L17.3,2.2 L17.3,7.5" fill="none" stroke="#a0a0a0" stroke-width="1.6"/><circle cx="3.6" cy="10.4" r="2.3" fill="#000"/><path d="M0.6000000000000001,17.6 L0.6000000000000001,15.8 C0.6000000000000001,13.8 6.6,13.8 6.6,15.8 L6.6,17.6 Z" fill="#000"/><circle cx="9.9" cy="10.4" r="2.3" fill="#000"/><path d="M6.9,17.6 L6.9,15.8 C6.9,13.8 12.9,13.8 12.9,15.8 L12.9,17.6 Z" fill="#000"/><circle cx="16.2" cy="10.4" r="2.3" fill="#000"/><path d="M13.2,17.6 L13.2,15.8 C13.2,13.8 19.2,13.8 19.2,15.8 L19.2,17.6 Z" fill="#000"/></svg>
<svg style="position:absolute;left:849.5px;top:749px" width="20" height="20" viewBox="0 0 20 20"><circle cx="3.6" cy="8.3" r="2.4" fill="#a0a0a0"/><path d="M0.20000000000000018,14.5 L0.20000000000000018,12.8 C0.20000000000000018,11 7.0,11 7.0,12.8 L7.0,14.5 Z" fill="#a0a0a0"/><circle cx="16.2" cy="8.3" r="2.4" fill="#a0a0a0"/><path d="M12.799999999999999,14.5 L12.799999999999999,12.8 C12.799999999999999,11 19.599999999999998,11 19.599999999999998,12.8 L19.599999999999998,14.5 Z" fill="#a0a0a0"/><circle cx="9.9" cy="6.2" r="3.6" fill="#fff"/><circle cx="9.9" cy="6.2" r="3.1" fill="#000"/><path d="M4.2,17 L4.2,14.6 C4.2,11.2 15.6,11.2 15.6,14.6 L15.6,17 Z" fill="#000" stroke="#fff" stroke-width="0.8"/></svg>
</body></html>
